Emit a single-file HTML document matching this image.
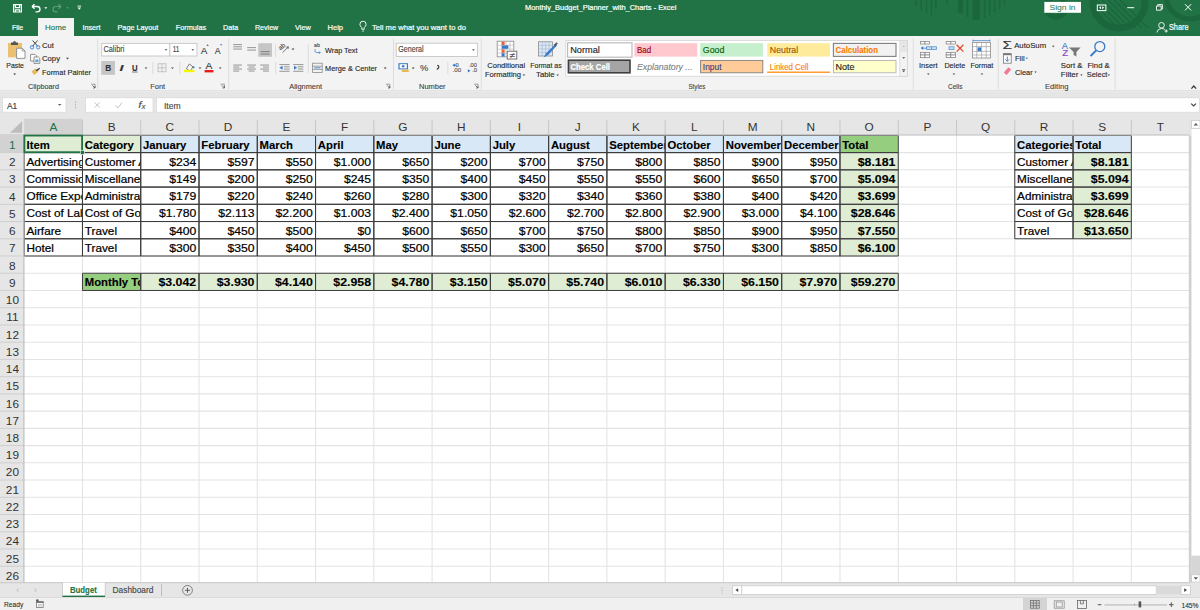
<!DOCTYPE html>
<html><head><meta charset="utf-8"><title>Excel</title>
<style>html,body{margin:0;padding:0;width:1200px;height:610px;overflow:hidden;background:#fff;font-family:"Liberation Sans", sans-serif;}</style>
</head><body>
<svg width="1200" height="610" viewBox="0 0 1200 610" style="position:absolute;left:0;top:0" font-family="&quot;Liberation Sans&quot;, sans-serif">
<rect x="0.00" y="0.00" width="1200.00" height="36.00" fill="#217346" />
<rect x="0.00" y="36.00" width="1200.00" height="55.00" fill="#F3F3F3" />
<rect x="0.00" y="90.30" width="1200.00" height="1.20" fill="#DCDCDC" />
<rect x="0.00" y="91.50" width="1200.00" height="43.87" fill="#E6E6E6" />
<g opacity="0.75" fill="none" stroke="#1A6239">
<rect x="915.6" y="0" width="1.4" height="6" fill="#1A6239" stroke="none"/>
<rect x="920.6" y="0" width="1.4" height="11" fill="#1A6239" stroke="none"/>
<rect x="925.8" y="0" width="1.4" height="13" fill="#1A6239" stroke="none"/>
<rect x="930.8" y="0" width="1.4" height="16" fill="#1A6239" stroke="none"/>
<rect x="935.2" y="0" width="1.4" height="9" fill="#1A6239" stroke="none"/>
<rect x="946.4" y="0" width="1.6" height="4" fill="#1A6239" stroke="none"/>
<rect x="957.8" y="0" width="5.2" height="13" fill="#1A6239" stroke="none"/>
<rect x="966.6" y="0" width="1.6" height="17" fill="#1A6239" stroke="none"/>
<rect x="972.6" y="0" width="7" height="20" fill="#1A6239" stroke="none"/>
<rect x="983.8" y="0" width="1.6" height="18" fill="#1A6239" stroke="none"/>
<rect x="988.8" y="0" width="1.6" height="15" fill="#1A6239" stroke="none"/>
<rect x="993.8" y="0" width="1.6" height="12" fill="#1A6239" stroke="none"/>
<rect x="998.8" y="0" width="1.6" height="9" fill="#1A6239" stroke="none"/>
<rect x="1003.8" y="0" width="1.4" height="5" fill="#1A6239" stroke="none"/>
<circle cx="1056" cy="7" r="10" stroke-width="5"/>
<circle cx="1119" cy="2" r="26" stroke-width="7"/>
<line x1="1090" y1="0" x2="1118" y2="28" stroke-width="1.2"/>
<line x1="1096" y1="0" x2="1124" y2="28" stroke-width="1.2"/>
<line x1="1102" y1="0" x2="1130" y2="28" stroke-width="1.2"/>
<line x1="1108" y1="0" x2="1136" y2="28" stroke-width="1.2"/>
<line x1="1114" y1="0" x2="1142" y2="28" stroke-width="1.2"/>
<line x1="1120" y1="0" x2="1148" y2="28" stroke-width="1.2"/>
<circle cx="1190" cy="-5" r="24" stroke-width="5"/>
</g>
<g fill="none" stroke="#fff" stroke-width="1.2"><path d="M13.6 4.6 H21.4 V12 H13.6 Z"/><path d="M15.4 4.8 V7.6 H19.6 V4.8"/><path d="M15.4 12 V9.8 H19.6 V12"/></g>
<path d="M32 6.5 L34.5 4.2 M32 6.5 L34.5 8.8 M32 6.5 H37 Q40 6.5 40 9.2 Q40 11.8 37 11.8 H35.5" fill="none" stroke="#fff" stroke-width="1.3"/>
<path d="M44.2 7.2 H47.4 L45.8 9 Z" fill="#fff"/>
<path d="M61 6.5 L58.5 4.2 M61 6.5 L58.5 8.8 M61 6.5 H56 Q53 6.5 53 9.2 Q53 11.8 56 11.8 H57.5" fill="none" stroke="#5E9C7A" stroke-width="1.2"/>
<path d="M66.2 7.2 H69 L67.6 8.8 Z" fill="#5E9C7A"/>
<rect x="77.5" y="5.6" width="3.6" height="0.9" fill="#fff"/><path d="M77.5 7.6 H81.1 L79.3 9.8 Z" fill="#fff"/>
<text x="525.00" y="10.20" font-size="7.3" fill="#FFFFFF" font-weight="normal" text-anchor="start" font-style="normal" textLength="151.30" lengthAdjust="spacingAndGlyphs" stroke="#FFFFFF" stroke-width="0.2">Monthly_Budget_Planner_with_Charts  -  Excel</text>
<rect x="1044.30" y="1.90" width="36.70" height="10.90" fill="#FFFFFF" />
<text x="1049.50" y="10.30" font-size="7.8" fill="#217346" font-weight="normal" text-anchor="start" font-style="normal" textLength="26" lengthAdjust="spacingAndGlyphs">Sign in</text>
<rect x="1097.3" y="5" width="8.6" height="5.6" fill="none" stroke="#fff" stroke-width="1"/><path d="M1099 7.8 L1101 6.3 V9.3 Z M1104.2 7.8 L1102.2 6.3 V9.3 Z" fill="#fff"/>
<rect x="1127.20" y="7.20" width="7.00" height="1.00" fill="#FFFFFF" />
<path d="M1156.5 6 H1161.2 V10.2 H1156.5 Z M1157.8 6 V4.6 H1162.4 V9 H1161.2" fill="none" stroke="#fff" stroke-width="0.9"/>
<path d="M1185 4.2 L1191.2 10.4 M1191.2 4.2 L1185 10.4" stroke="#fff" stroke-width="1"/>
<g fill="none" stroke="#fff" stroke-width="0.9"><circle cx="1161.5" cy="25.3" r="2.8"/><path d="M1156.8 32.5 Q1157.5 28.6 1161.5 28.4 Q1163.6 28.5 1164.8 29.6"/><path d="M1164.6 31 H1167.8 M1166.2 29.4 V32.6"/></g>
<text x="1169.00" y="30.30" font-size="8.2" fill="#FFFFFF" font-weight="normal" text-anchor="start" font-style="normal" textLength="19.50" lengthAdjust="spacingAndGlyphs" stroke="#FFFFFF" stroke-width="0.2">Share</text>
<rect x="38.00" y="18.00" width="36.00" height="18.50" fill="#F3F3F3" />
<text x="12.00" y="30.30" font-size="8" fill="#FFFFFF" font-weight="normal" text-anchor="start" font-style="normal" textLength="11.20" lengthAdjust="spacingAndGlyphs" stroke="#FFFFFF" stroke-width="0.2">File</text>
<text x="45.00" y="30.30" font-size="8" fill="#217346" font-weight="normal" text-anchor="start" font-style="normal" textLength="21.20" lengthAdjust="spacingAndGlyphs" stroke="#217346" stroke-width="0.12">Home</text>
<text x="82.50" y="30.30" font-size="8" fill="#FFFFFF" font-weight="normal" text-anchor="start" font-style="normal" textLength="18.00" lengthAdjust="spacingAndGlyphs" stroke="#FFFFFF" stroke-width="0.2">Insert</text>
<text x="117.50" y="30.30" font-size="8" fill="#FFFFFF" font-weight="normal" text-anchor="start" font-style="normal" textLength="40.80" lengthAdjust="spacingAndGlyphs" stroke="#FFFFFF" stroke-width="0.2">Page Layout</text>
<text x="175.80" y="30.30" font-size="8" fill="#FFFFFF" font-weight="normal" text-anchor="start" font-style="normal" textLength="30.40" lengthAdjust="spacingAndGlyphs" stroke="#FFFFFF" stroke-width="0.2">Formulas</text>
<text x="223.00" y="30.30" font-size="8" fill="#FFFFFF" font-weight="normal" text-anchor="start" font-style="normal" textLength="15.20" lengthAdjust="spacingAndGlyphs" stroke="#FFFFFF" stroke-width="0.2">Data</text>
<text x="255.00" y="30.30" font-size="8" fill="#FFFFFF" font-weight="normal" text-anchor="start" font-style="normal" textLength="23.20" lengthAdjust="spacingAndGlyphs" stroke="#FFFFFF" stroke-width="0.2">Review</text>
<text x="295.00" y="30.30" font-size="8" fill="#FFFFFF" font-weight="normal" text-anchor="start" font-style="normal" textLength="15.80" lengthAdjust="spacingAndGlyphs" stroke="#FFFFFF" stroke-width="0.2">View</text>
<text x="327.50" y="30.30" font-size="8" fill="#FFFFFF" font-weight="normal" text-anchor="start" font-style="normal" textLength="15.50" lengthAdjust="spacingAndGlyphs" stroke="#FFFFFF" stroke-width="0.2">Help</text>
<g fill="none" stroke="#fff" stroke-width="0.9"><path d="M361.8 29.3 V27.6 Q359.9 26.2 359.9 24.3 Q359.9 21.2 363 21.2 Q366.1 21.2 366.1 24.3 Q366.1 26.2 364.2 27.6 V29.3 Z"/><path d="M362.2 31.1 H363.8"/></g>
<text x="372.00" y="30.30" font-size="8" fill="#FFFFFF" font-weight="normal" text-anchor="start" font-style="normal" textLength="94.00" lengthAdjust="spacingAndGlyphs" stroke="#FFFFFF" stroke-width="0.2">Tell me what you want to do</text>
<rect x="8.00" y="43.00" width="14.00" height="14.30" fill="#EAC172" />
<path d="M11 45 V42.6 H13 Q13.3 41 14.5 41 Q15.7 41 16 42.6 H18 V45 Z" fill="#555"/>
<path d="M16.6 48.2 H22.2 L25 51 V58.4 H16.6 Z" fill="#fff" stroke="#8A8A8A" stroke-width="0.9"/>
<path d="M22.2 48.2 V51 H25" fill="none" stroke="#8A8A8A" stroke-width="0.8"/>
<text x="6.30" y="67.60" font-size="7.6" fill="#262626" font-weight="normal" text-anchor="start" font-style="normal" textLength="17.60" lengthAdjust="spacingAndGlyphs" stroke="#262626" stroke-width="0.12">Paste</text>
<path d="M13.30 73.60 H16.10 L14.70 75.14 Z" fill="#444"/>
<path d="M32.6 40.5 L37.8 46.3 M37.6 40.5 L32.5 46.3" stroke="#444" stroke-width="1"/>
<circle cx="32" cy="47.3" r="1.7" fill="none" stroke="#3E8EDE" stroke-width="1"/><circle cx="38.2" cy="47.3" r="1.7" fill="none" stroke="#3E8EDE" stroke-width="1"/>
<text x="42.00" y="47.60" font-size="7.6" fill="#262626" font-weight="normal" text-anchor="start" font-style="normal" textLength="11.80" lengthAdjust="spacingAndGlyphs" stroke="#262626" stroke-width="0.12">Cut</text>
<path d="M30.6 54.4 H35 L36.4 55.8 V61 H30.6 Z" fill="#fff" stroke="#777" stroke-width="0.8"/><path d="M34 57 H38.4 L39.8 58.4 V63.4 H34 Z" fill="#fff" stroke="#777" stroke-width="0.8"/><rect x="35.2" y="59.4" width="3.4" height="2.8" fill="#6FA6DC"/>
<text x="42.00" y="61.30" font-size="7.6" fill="#262626" font-weight="normal" text-anchor="start" font-style="normal" textLength="18.00" lengthAdjust="spacingAndGlyphs" stroke="#262626" stroke-width="0.12">Copy</text>
<path d="M66.00 57.80 H69.00 L67.50 59.45 Z" fill="#444"/>
<path d="M31.5 71.6 L35.2 68.6 L38 72 L34.2 75 Z" fill="#E8B95A"/><path d="M35.6 70 L39.6 67.8 L40 68.8 L37 71.6 Z" fill="#444"/>
<text x="42.00" y="74.80" font-size="7.6" fill="#262626" font-weight="normal" text-anchor="start" font-style="normal" textLength="49.00" lengthAdjust="spacingAndGlyphs" stroke="#262626" stroke-width="0.12">Format Painter</text>
<text x="28.00" y="88.80" font-size="7.4" fill="#444" font-weight="normal" text-anchor="start" font-style="normal" textLength="31.00" lengthAdjust="spacingAndGlyphs" stroke="#444" stroke-width="0.12">Clipboard</text>
<path d="M91.2 84.2 H95.0 V88.0" fill="none" stroke="#777" stroke-width="0.7"/><path d="M92.4 85.4 L94.8 87.8 M95.0 86.2 V88.0 H93.2" fill="none" stroke="#555" stroke-width="0.8"/>
<rect x="97.30" y="38.50" width="0.90" height="51.00" fill="#DADADA" />
<rect x="101.7" y="43.4" width="68.2" height="12.6" fill="#fff" stroke="#C6C6C6" stroke-width="0.9"/>
<rect x="169.9" y="43.4" width="27" height="12.6" fill="#fff" stroke="#C6C6C6" stroke-width="0.9"/>
<text x="103.40" y="52.40" font-size="8.2" fill="#444" font-weight="normal" text-anchor="start" font-style="normal" textLength="21.00" lengthAdjust="spacingAndGlyphs" stroke="#444" stroke-width="0.12">Calibri</text>
<path d="M164.60 49.20 H167.40 L166.00 50.74 Z" fill="#444"/>
<text x="172.80" y="52.40" font-size="8.2" fill="#444" font-weight="normal" text-anchor="start" font-style="normal" textLength="6.60" lengthAdjust="spacingAndGlyphs" stroke="#444" stroke-width="0.12">11</text>
<path d="M191.40 49.20 H194.20 L192.80 50.74 Z" fill="#444"/>
<text x="200.80" y="53.60" font-size="9.6" fill="#444" font-weight="normal" text-anchor="start" font-style="normal" textLength="6.60" lengthAdjust="spacingAndGlyphs" stroke="#444" stroke-width="0.12">A</text>
<path d="M206.4 45.8 L207.6 44.2 L208.8 45.8 Z" fill="#444"/>
<text x="214.80" y="53.60" font-size="8.2" fill="#444" font-weight="normal" text-anchor="start" font-style="normal" textLength="5.80" lengthAdjust="spacingAndGlyphs" stroke="#444" stroke-width="0.12">A</text>
<path d="M220 44.2 L221.2 45.8 L222.4 44.2 Z" fill="#3A7BC8"/>
<rect x="101.20" y="61.00" width="13.80" height="13.80" fill="#C6C6C6" />
<text x="105.20" y="71.40" font-size="8.6" fill="#333" font-weight="bold" text-anchor="start" font-style="normal" textLength="6.00" lengthAdjust="spacingAndGlyphs" stroke="#333" stroke-width="0.12">B</text>
<text x="119.60" y="71.40" font-size="8.6" fill="#333" font-weight="bold" text-anchor="start" font-style="italic" textLength="4.00" lengthAdjust="spacingAndGlyphs" stroke="#333" stroke-width="0.12">I</text>
<text x="132.00" y="70.60" font-size="8.4" fill="#333" font-weight="bold" text-anchor="start" font-style="normal" textLength="5.60" lengthAdjust="spacingAndGlyphs" stroke="#333" stroke-width="0.12">U</text>
<rect x="132.00" y="71.60" width="5.60" height="0.80" fill="#555" />
<path d="M144.60 67.40 H147.40 L146.00 68.94 Z" fill="#444"/>
<rect x="152.40" y="62.00" width="0.90" height="12.00" fill="#DADADA" />
<g fill="none" stroke="#B8B8B8" stroke-width="0.8"><rect x="158" y="63.8" width="8" height="8"/><path d="M162 63.8 V71.8 M158 67.8 H166"/></g>
<path d="M171.00 67.40 H173.80 L172.40 68.94 Z" fill="#444"/>
<rect x="179.40" y="62.00" width="0.90" height="12.00" fill="#DADADA" />
<path d="M186.4 68.6 L189.4 64 L193 67 L190 71 Z" fill="#fff" stroke="#555" stroke-width="0.8"/><circle cx="193.6" cy="67.2" r="1" fill="#3A7BC8"/>
<rect x="184.00" y="69.80" width="10.40" height="2.40" fill="#F5F500" />
<path d="M198.60 67.40 H201.40 L200.00 68.94 Z" fill="#444"/>
<text x="205.40" y="68.80" font-size="8.8" fill="#333" font-weight="normal" text-anchor="start" font-style="normal" textLength="6.80" lengthAdjust="spacingAndGlyphs" stroke="#333" stroke-width="0.12">A</text>
<rect x="204.60" y="70.00" width="8.80" height="2.40" fill="#E81A1A" />
<path d="M218.80 67.40 H221.60 L220.20 68.94 Z" fill="#444"/>
<text x="150.20" y="88.80" font-size="7.4" fill="#444" font-weight="normal" text-anchor="start" font-style="normal" textLength="15.00" lengthAdjust="spacingAndGlyphs" stroke="#444" stroke-width="0.12">Font</text>
<path d="M220.6 84.2 H224.4 V88.0" fill="none" stroke="#777" stroke-width="0.7"/><path d="M221.79999999999998 85.4 L224.2 87.8 M224.4 86.2 V88.0 H222.6" fill="none" stroke="#555" stroke-width="0.8"/>
<rect x="228.30" y="38.50" width="0.90" height="51.00" fill="#DADADA" />
<rect x="233.20" y="44.20" width="8.80" height="0.90" fill="#8A8A8A" />
<rect x="233.20" y="46.40" width="8.80" height="0.90" fill="#8A8A8A" />
<rect x="233.20" y="48.60" width="8.80" height="0.90" fill="#8A8A8A" />
<rect x="247.20" y="47.20" width="8.80" height="0.90" fill="#8A8A8A" />
<rect x="247.20" y="49.60" width="8.80" height="0.90" fill="#8A8A8A" />
<rect x="258.20" y="43.20" width="13.80" height="13.60" fill="#C6C6C6" />
<rect x="260.60" y="51.20" width="9.00" height="0.90" fill="#777" />
<rect x="260.60" y="53.60" width="9.00" height="0.90" fill="#777" />
<rect x="275.20" y="44.00" width="0.90" height="13.00" fill="#DADADA" />
<text transform="translate(280.6,50.6) rotate(-42)" font-size="6.4" fill="#444" stroke="#444" stroke-width="0.1">ab</text>
<path d="M282.6 52.6 L288.4 46.8 M288.4 46.8 L286.2 47.2 M288.4 46.8 L288 49" fill="none" stroke="#555" stroke-width="0.8"/>
<path d="M291.60 48.60 H294.40 L293.00 50.14 Z" fill="#444"/>
<rect x="307.80" y="44.00" width="0.90" height="29.00" fill="#DADADA" />
<text x="314.00" y="47.40" font-size="5.6" fill="#444" font-weight="normal" text-anchor="start" font-style="normal" textLength="5.80" lengthAdjust="spacingAndGlyphs" stroke="#444" stroke-width="0.12">ab</text>
<path d="M315.2 49.2 Q313.8 52.6 317.8 52.6 H320.2 L319 51.4 M320.2 52.6 L319 53.8" fill="none" stroke="#3A7BC8" stroke-width="0.8"/>
<text x="325.00" y="53.00" font-size="7.6" fill="#262626" font-weight="normal" text-anchor="start" font-style="normal" textLength="32.40" lengthAdjust="spacingAndGlyphs" stroke="#262626" stroke-width="0.12">Wrap Text</text>
<rect x="233.20" y="64.60" width="8.80" height="0.90" fill="#8A8A8A" />
<rect x="233.20" y="66.60" width="6.00" height="0.90" fill="#8A8A8A" />
<rect x="233.20" y="68.60" width="8.80" height="0.90" fill="#8A8A8A" />
<rect x="233.20" y="70.60" width="6.00" height="0.90" fill="#8A8A8A" />
<rect x="247.20" y="64.60" width="8.80" height="0.90" fill="#8A8A8A" />
<rect x="248.60" y="66.60" width="6.00" height="0.90" fill="#8A8A8A" />
<rect x="247.20" y="68.60" width="8.80" height="0.90" fill="#8A8A8A" />
<rect x="248.60" y="70.60" width="6.00" height="0.90" fill="#8A8A8A" />
<rect x="260.20" y="64.60" width="8.80" height="0.90" fill="#8A8A8A" />
<rect x="263.00" y="66.60" width="6.00" height="0.90" fill="#8A8A8A" />
<rect x="260.20" y="68.60" width="8.80" height="0.90" fill="#8A8A8A" />
<rect x="263.00" y="70.60" width="6.00" height="0.90" fill="#8A8A8A" />
<rect x="275.20" y="62.00" width="0.90" height="12.00" fill="#DADADA" />
<rect x="279.40" y="64.20" width="10.20" height="0.90" fill="#8A8A8A" />
<rect x="284.00" y="66.40" width="5.60" height="0.90" fill="#8A8A8A" />
<rect x="284.00" y="68.60" width="5.60" height="0.90" fill="#8A8A8A" />
<rect x="279.40" y="70.80" width="10.20" height="0.90" fill="#8A8A8A" />
<path d="M279.4 67.8 L282.6 65.8 V69.8 Z" fill="#3A7BC8"/>
<rect x="293.20" y="64.20" width="10.20" height="0.90" fill="#8A8A8A" />
<rect x="297.80" y="66.40" width="5.60" height="0.90" fill="#8A8A8A" />
<rect x="297.80" y="68.60" width="5.60" height="0.90" fill="#8A8A8A" />
<rect x="293.20" y="70.80" width="10.20" height="0.90" fill="#8A8A8A" />
<path d="M297.2 67.8 L294 65.8 V69.8 Z" fill="#3A7BC8"/>
<g fill="none" stroke="#8A8A8A" stroke-width="0.8"><rect x="312.6" y="63.2" width="9.6" height="9.2"/><path d="M312.6 66.2 H322.2 M312.6 69.4 H322.2"/></g>
<rect x="314.20" y="67.40" width="6.40" height="0.90" fill="#3A7BC8" />
<text x="325.00" y="70.60" font-size="7.6" fill="#262626" font-weight="normal" text-anchor="start" font-style="normal" textLength="52.00" lengthAdjust="spacingAndGlyphs" stroke="#262626" stroke-width="0.12">Merge &amp; Center</text>
<path d="M383.80 67.60 H386.60 L385.20 69.14 Z" fill="#444"/>
<text x="289.20" y="88.80" font-size="7.4" fill="#444" font-weight="normal" text-anchor="start" font-style="normal" textLength="33.00" lengthAdjust="spacingAndGlyphs" stroke="#444" stroke-width="0.12">Alignment</text>
<path d="M386 84.2 H389.8 V88.0" fill="none" stroke="#777" stroke-width="0.7"/><path d="M387.2 85.4 L389.6 87.8 M389.8 86.2 V88.0 H388" fill="none" stroke="#555" stroke-width="0.8"/>
<rect x="393.00" y="38.50" width="0.90" height="51.00" fill="#DADADA" />
<rect x="396.2" y="43.2" width="81.2" height="13.3" fill="#fff" stroke="#C6C6C6" stroke-width="0.9"/>
<text x="398.20" y="52.40" font-size="8.2" fill="#444" font-weight="normal" text-anchor="start" font-style="normal" textLength="25.40" lengthAdjust="spacingAndGlyphs" stroke="#444" stroke-width="0.12">General</text>
<path d="M472.00 49.20 H474.80 L473.40 50.74 Z" fill="#444"/>
<rect x="398.4" y="63.2" width="9.6" height="6.2" fill="#3A7BC8"/><rect x="399.6" y="64.2" width="7.2" height="4.2" fill="#fff"/><circle cx="403.2" cy="66.3" r="1.3" fill="#3A7BC8"/><rect x="401.8" y="69.6" width="7" height="2.4" fill="#E8B95A"/>
<path d="M411.80 67.60 H414.60 L413.20 69.14 Z" fill="#444"/>
<text x="420.00" y="71.20" font-size="9.4" fill="#444" font-weight="normal" text-anchor="start" font-style="normal" textLength="8.20" lengthAdjust="spacingAndGlyphs" stroke="#444" stroke-width="0.12">%</text>
<path d="M437.2 65.4 Q438.8 65.4 438.8 66.8 Q438.8 68.6 436.8 69.4" fill="none" stroke="#444" stroke-width="1.3"/>
<rect x="447.40" y="62.00" width="0.90" height="12.00" fill="#DADADA" />
<text x="455.40" y="67.20" font-size="5.4" fill="#555" font-weight="normal" text-anchor="start" font-style="normal" textLength="3.20" lengthAdjust="spacingAndGlyphs" stroke="#555" stroke-width="0.12">0</text>
<text x="452.60" y="72.40" font-size="5.4" fill="#555" font-weight="normal" text-anchor="start" font-style="normal" textLength="8.60" lengthAdjust="spacingAndGlyphs" stroke="#555" stroke-width="0.12">.00</text>
<path d="M452.2 65.2 L455 63.6 V66.8 Z" fill="#3A7BC8"/><rect x="454" y="64.8" width="2.6" height="0.9" fill="#3A7BC8"/>
<text x="469.00" y="67.20" font-size="5.4" fill="#555" font-weight="normal" text-anchor="start" font-style="normal" textLength="8.00" lengthAdjust="spacingAndGlyphs" stroke="#555" stroke-width="0.12">.00</text>
<text x="472.20" y="72.40" font-size="5.4" fill="#555" font-weight="normal" text-anchor="start" font-style="normal" textLength="5.00" lengthAdjust="spacingAndGlyphs" stroke="#555" stroke-width="0.12">.0</text>
<path d="M470.6 70.8 L467.8 69.2 V72.4 Z" fill="#3A7BC8" transform="translate(0,0)"/>
<text x="419.00" y="88.80" font-size="7.4" fill="#444" font-weight="normal" text-anchor="start" font-style="normal" textLength="26.60" lengthAdjust="spacingAndGlyphs" stroke="#444" stroke-width="0.12">Number</text>
<path d="M474.2 84.2 H478.0 V88.0" fill="none" stroke="#777" stroke-width="0.7"/><path d="M475.4 85.4 L477.8 87.8 M478.0 86.2 V88.0 H476.2" fill="none" stroke="#555" stroke-width="0.8"/>
<rect x="480.80" y="38.50" width="0.90" height="51.00" fill="#DADADA" />
<g><rect x="497.2" y="41.2" width="16.6" height="15.6" fill="#fff" stroke="#8A8A8A" stroke-width="0.8"/><path d="M497.2 45.2 H513.8 M497.2 49.2 H513.8 M497.2 53 H513.8 M501.6 41.2 V56.8 M506 41.2 V56.8 M510 41.2 V56.8" stroke="#B0B0B0" stroke-width="0.6"/><rect x="501.8" y="41.6" width="2.8" height="3.4" fill="#E8623A"/><rect x="501.8" y="45.4" width="6.6" height="3.4" fill="#3A7BC8"/><rect x="501.8" y="49.4" width="2.8" height="3.4" fill="#E8623A"/><rect x="501.8" y="53.2" width="2.8" height="3.4" fill="#3A7BC8"/><rect x="507.2" y="51.2" width="9.6" height="7.8" fill="#fff" stroke="#555" stroke-width="0.8"/></g>
<text x="509.40" y="57.60" font-size="7.6" fill="#333" font-weight="normal" text-anchor="start" font-style="normal" textLength="5.60" lengthAdjust="spacingAndGlyphs" stroke="#333" stroke-width="0.12">≠</text>
<text x="487.20" y="67.80" font-size="7.6" fill="#262626" font-weight="normal" text-anchor="start" font-style="normal" textLength="38.00" lengthAdjust="spacingAndGlyphs" stroke="#262626" stroke-width="0.12">Conditional</text>
<text x="485.00" y="77.20" font-size="7.6" fill="#262626" font-weight="normal" text-anchor="start" font-style="normal" textLength="36.00" lengthAdjust="spacingAndGlyphs" stroke="#262626" stroke-width="0.12">Formatting</text>
<path d="M522.60 74.60 H525.20 L523.90 76.03 Z" fill="#444"/>
<g><rect x="538.6" y="41.8" width="13.8" height="14.2" fill="#DCE8F5" stroke="#8A8A8A" stroke-width="0.8"/><path d="M538.6 45.4 H552.4 M538.6 49 H552.4 M538.6 52.4 H552.4 M542.2 41.8 V56 M545.6 41.8 V56 M549 41.8 V56" stroke="#9FB7D3" stroke-width="0.6"/><path d="M543.6 57.6 L546 53.2 L555.6 44 L557 45.4 L548 55 Z" fill="#3A7BC8"/><path d="M553.6 45 L556.6 42.2 L557.8 43.4 L555 46.4 Z" fill="#555"/></g>
<text x="530.20" y="67.80" font-size="7.6" fill="#262626" font-weight="normal" text-anchor="start" font-style="normal" textLength="31.60" lengthAdjust="spacingAndGlyphs" stroke="#262626" stroke-width="0.12">Format as</text>
<text x="536.00" y="77.20" font-size="7.6" fill="#262626" font-weight="normal" text-anchor="start" font-style="normal" textLength="18.60" lengthAdjust="spacingAndGlyphs" stroke="#262626" stroke-width="0.12">Table</text>
<path d="M556.40 74.60 H559.00 L557.70 76.03 Z" fill="#444"/>
<rect x="565.8" y="40.4" width="341.6" height="35.8" fill="#FFFFFF" stroke="#D4D4D4" stroke-width="0.8"/>
<rect x="567.60" y="42.80" width="64.40" height="14.40" fill="#FFFFFF" stroke="#BDBDBD" stroke-width="1.2"/>
<text x="570.20" y="52.80" font-size="8.2" fill="#222" font-weight="normal" text-anchor="start" font-style="normal" textLength="29.60" lengthAdjust="spacingAndGlyphs" stroke="#222" stroke-width="0.12">Normal</text>
<rect x="568.40" y="60.20" width="61.60" height="12.60" fill="#A5A5A5" stroke="#3F3F3F" stroke-width="1.6"/>
<text x="570.40" y="69.80" font-size="8.4" fill="#FFFFFF" font-weight="bold" text-anchor="start" font-style="normal" textLength="39.60" lengthAdjust="spacingAndGlyphs" stroke="#FFFFFF" stroke-width="0.2">Check Cell</text>
<rect x="634.40" y="43.20" width="62.80" height="13.40" fill="#FFC7CE" />
<text x="637.00" y="52.80" font-size="8.2" fill="#9C0006" font-weight="normal" text-anchor="start" font-style="normal" textLength="14.20" lengthAdjust="spacingAndGlyphs" stroke="#9C0006" stroke-width="0.12">Bad</text>
<text x="637.00" y="69.60" font-size="8.2" fill="#7F7F7F" font-weight="normal" text-anchor="start" font-style="italic" textLength="55.60" lengthAdjust="spacingAndGlyphs" stroke="#7F7F7F" stroke-width="0.12">Explanatory ...</text>
<rect x="700.20" y="43.20" width="62.80" height="13.40" fill="#C6EFCE" />
<text x="702.80" y="52.80" font-size="8.2" fill="#006100" font-weight="normal" text-anchor="start" font-style="normal" textLength="21.60" lengthAdjust="spacingAndGlyphs" stroke="#006100" stroke-width="0.12">Good</text>
<rect x="700.60" y="60.40" width="62.20" height="12.40" fill="#FFCC99" stroke="#7F7F7F" stroke-width="0.9"/>
<text x="702.80" y="69.60" font-size="8.2" fill="#3F3F76" font-weight="normal" text-anchor="start" font-style="normal" textLength="18.80" lengthAdjust="spacingAndGlyphs" stroke="#3F3F76" stroke-width="0.12">Input</text>
<rect x="767.20" y="43.20" width="62.80" height="13.40" fill="#FFEB9C" />
<text x="769.80" y="52.80" font-size="8.2" fill="#9C5700" font-weight="normal" text-anchor="start" font-style="normal" textLength="28.40" lengthAdjust="spacingAndGlyphs" stroke="#9C5700" stroke-width="0.12">Neutral</text>
<text x="769.80" y="69.60" font-size="8.2" fill="#FA7D00" font-weight="normal" text-anchor="start" font-style="normal" textLength="38.80" lengthAdjust="spacingAndGlyphs" stroke="#FA7D00" stroke-width="0.12">Linked Cell</text>
<rect x="767.20" y="71.60" width="62.80" height="1.20" fill="#FF8001" />
<rect x="833.40" y="43.40" width="62.60" height="13.00" fill="#F2F2F2" stroke="#7F7F7F" stroke-width="1.1"/>
<text x="835.60" y="52.80" font-size="8.2" fill="#FA7D00" font-weight="bold" text-anchor="start" font-style="normal" textLength="42.40" lengthAdjust="spacingAndGlyphs" stroke="#FA7D00" stroke-width="0.12">Calculation</text>
<rect x="833.40" y="60.40" width="62.60" height="12.40" fill="#FFFFCC" stroke="#B2B2B2" stroke-width="0.9"/>
<text x="835.60" y="69.60" font-size="8.2" fill="#222" font-weight="normal" text-anchor="start" font-style="normal" textLength="19.00" lengthAdjust="spacingAndGlyphs" stroke="#222" stroke-width="0.12">Note</text>
<rect x="899.8" y="40.4" width="7.6" height="35.8" fill="#F3F3F3" stroke="#D4D4D4" stroke-width="0.8"/>
<rect x="900.20" y="40.80" width="6.80" height="11.60" fill="#E6E6E6" />
<path d="M902.4 47 H905 L903.7 45.8 Z" fill="#B8B8B8"/><path d="M902.2 57.2 H905.2 L903.7 58.8 Z" fill="#444"/><rect x="902.2" y="69.2" width="3" height="0.7" fill="#444"/><path d="M902.2 70.6 H905.2 L903.7 72.2 Z" fill="#444"/>
<text x="688.40" y="88.80" font-size="7.4" fill="#444" font-weight="normal" text-anchor="start" font-style="normal" textLength="17.00" lengthAdjust="spacingAndGlyphs" stroke="#444" stroke-width="0.12">Styles</text>
<rect x="912.80" y="38.50" width="0.90" height="51.00" fill="#DADADA" />
<g fill="#fff" stroke="#8A8A8A" stroke-width="0.8"><rect x="920.4" y="41.4" width="4.6" height="2.6"/><rect x="925" y="41.4" width="4.6" height="2.6"/><rect x="926.4" y="46.8" width="5" height="2.6" fill="#CFE0F3" stroke="#5B8FCC"/><rect x="931.4" y="46.8" width="5" height="2.6" fill="#CFE0F3" stroke="#5B8FCC"/><rect x="920.4" y="52.4" width="4.6" height="2.6"/><rect x="925" y="52.4" width="4.6" height="2.6"/><rect x="920.4" y="55" width="4.6" height="2.6"/><rect x="925" y="55" width="4.6" height="2.6"/></g><path d="M920.6 48.1 L923.2 46.2 V50 Z M922.6 47.7 H926.2 V48.6 H922.6 Z" fill="#3A7BC8"/>
<text x="919.00" y="67.80" font-size="7.6" fill="#262626" font-weight="normal" text-anchor="start" font-style="normal" textLength="18.60" lengthAdjust="spacingAndGlyphs" stroke="#262626" stroke-width="0.12">Insert</text>
<path d="M927.00 73.60 H929.60 L928.30 75.03 Z" fill="#444"/>
<g fill="#fff" stroke="#8A8A8A" stroke-width="0.8"><rect x="946.2" y="41.4" width="4.6" height="2.6"/><rect x="950.8" y="41.4" width="4.6" height="2.6"/><rect x="949" y="46.8" width="5" height="2.6" fill="#CFE0F3" stroke="#5B8FCC"/><rect x="946.2" y="52.4" width="4.6" height="2.6"/><rect x="950.8" y="52.4" width="4.6" height="2.6"/><rect x="946.2" y="55" width="4.6" height="2.6"/><rect x="950.8" y="55" width="4.6" height="2.6"/></g><path d="M956.6 44.8 L963.4 51.6 M963.4 44.8 L956.6 51.6" stroke="#E34A2A" stroke-width="1.3"/>
<text x="944.40" y="67.80" font-size="7.6" fill="#262626" font-weight="normal" text-anchor="start" font-style="normal" textLength="20.80" lengthAdjust="spacingAndGlyphs" stroke="#262626" stroke-width="0.12">Delete</text>
<path d="M952.60 73.60 H955.20 L953.90 75.03 Z" fill="#444"/>
<g><rect x="972.4" y="42.6" width="18" height="15.4" fill="#fff" stroke="#8A8A8A" stroke-width="0.8"/><path d="M972.4 46.6 H990.4 M972.4 51.4 H990.4 M972.4 55 H990.4 M976.8 42.6 V58 M981.6 42.6 V58 M986.2 42.6 V58" stroke="#A0A0A0" stroke-width="0.7"/><rect x="977.6" y="47.4" width="3.6" height="3.8" fill="#3A7BC8"/><path d="M972.6 40.6 H990.2 M973 39.6 V41.6 M989.8 39.6 V41.6" stroke="#3A7BC8" stroke-width="0.7"/></g>
<text x="970.40" y="67.80" font-size="7.6" fill="#262626" font-weight="normal" text-anchor="start" font-style="normal" textLength="23.00" lengthAdjust="spacingAndGlyphs" stroke="#262626" stroke-width="0.12">Format</text>
<path d="M980.60 73.60 H983.20 L981.90 75.03 Z" fill="#444"/>
<text x="948.00" y="88.80" font-size="7.4" fill="#444" font-weight="normal" text-anchor="start" font-style="normal" textLength="14.40" lengthAdjust="spacingAndGlyphs" stroke="#444" stroke-width="0.12">Cells</text>
<rect x="997.80" y="38.50" width="0.90" height="51.00" fill="#DADADA" />
<text x="1002.60" y="49.00" font-size="10.2" fill="#333" font-weight="normal" text-anchor="start" font-style="normal" textLength="9.60" lengthAdjust="spacingAndGlyphs" stroke="#333" stroke-width="0.12">Σ</text>
<text x="1014.20" y="48.00" font-size="7.6" fill="#262626" font-weight="normal" text-anchor="start" font-style="normal" textLength="32.00" lengthAdjust="spacingAndGlyphs" stroke="#262626" stroke-width="0.12">AutoSum</text>
<path d="M1052.00 45.80 H1054.60 L1053.30 47.23 Z" fill="#444"/>
<rect x="1003.4" y="53.6" width="7.8" height="9.6" fill="#fff" stroke="#777" stroke-width="0.8"/><rect x="1003.4" y="53.6" width="7.8" height="1.6" fill="#777"/><path d="M1007.3 56.6 V61.2 M1005.4 59.4 L1007.3 61.4 L1009.2 59.4" fill="none" stroke="#3A7BC8" stroke-width="0.9"/>
<text x="1015.00" y="61.20" font-size="7.6" fill="#262626" font-weight="normal" text-anchor="start" font-style="normal" textLength="9.60" lengthAdjust="spacingAndGlyphs" stroke="#262626" stroke-width="0.12">Fill</text>
<path d="M1025.60 57.80 H1028.00 L1026.80 59.12 Z" fill="#444"/>
<path d="M1003.8 72.6 L1008.4 67.2 L1011.2 69.6 L1006.6 75 Z" fill="#F07A96"/>
<text x="1015.00" y="74.80" font-size="7.6" fill="#262626" font-weight="normal" text-anchor="start" font-style="normal" textLength="17.60" lengthAdjust="spacingAndGlyphs" stroke="#262626" stroke-width="0.12">Clear</text>
<path d="M1034.40 71.60 H1036.80 L1035.60 72.92 Z" fill="#444"/>
<text x="1061.80" y="48.60" font-size="8.8" fill="#3A7BC8" font-weight="normal" text-anchor="start" font-style="normal" textLength="6.20" lengthAdjust="spacingAndGlyphs" stroke="#3A7BC8" stroke-width="0.12">A</text>
<text x="1062.20" y="56.40" font-size="8.8" fill="#8A44C8" font-weight="normal" text-anchor="start" font-style="normal" textLength="6.00" lengthAdjust="spacingAndGlyphs" stroke="#8A44C8" stroke-width="0.12">Z</text>
<path d="M1069 47.4 H1080.6 L1076.4 52 V56.6 L1073.6 55 V52 Z" fill="#777"/>
<text x="1060.80" y="67.80" font-size="7.6" fill="#262626" font-weight="normal" text-anchor="start" font-style="normal" textLength="21.60" lengthAdjust="spacingAndGlyphs" stroke="#262626" stroke-width="0.12">Sort &amp;</text>
<text x="1060.80" y="77.20" font-size="7.6" fill="#262626" font-weight="normal" text-anchor="start" font-style="normal" textLength="17.60" lengthAdjust="spacingAndGlyphs" stroke="#262626" stroke-width="0.12">Filter</text>
<path d="M1080.20 74.60 H1082.60 L1081.40 75.92 Z" fill="#444"/>
<circle cx="1099.8" cy="46.6" r="5" fill="none" stroke="#3A7BC8" stroke-width="1.3"/><path d="M1096.2 50.4 L1090.6 56" stroke="#3A7BC8" stroke-width="2"/>
<text x="1087.40" y="67.80" font-size="7.6" fill="#262626" font-weight="normal" text-anchor="start" font-style="normal" textLength="22.40" lengthAdjust="spacingAndGlyphs" stroke="#262626" stroke-width="0.12">Find &amp;</text>
<text x="1086.80" y="77.20" font-size="7.6" fill="#262626" font-weight="normal" text-anchor="start" font-style="normal" textLength="20.60" lengthAdjust="spacingAndGlyphs" stroke="#262626" stroke-width="0.12">Select</text>
<path d="M1107.60 74.60 H1110.00 L1108.80 75.92 Z" fill="#444"/>
<text x="1045.00" y="88.80" font-size="7.4" fill="#444" font-weight="normal" text-anchor="start" font-style="normal" textLength="23.40" lengthAdjust="spacingAndGlyphs" stroke="#444" stroke-width="0.12">Editing</text>
<rect x="1114.60" y="38.50" width="0.90" height="51.00" fill="#DADADA" />
<path d="M1191.4 88.6 L1193.8 86 L1196.2 88.6" fill="none" stroke="#333" stroke-width="1.2"/>
<rect x="2.6" y="97.8" width="63.4" height="14.4" fill="#fff" stroke="#D8D8D8" stroke-width="0.7"/>
<text x="7.00" y="108.60" font-size="8.6" fill="#333" font-weight="normal" text-anchor="start" font-style="normal" textLength="10.20" lengthAdjust="spacingAndGlyphs" stroke="#333" stroke-width="0.12">A1</text>
<path d="M58.00 104.00 H61.40 L59.70 105.87 Z" fill="#555"/>
<rect x="75.00" y="101.60" width="1.00" height="1.00" fill="#999" />
<rect x="75.00" y="104.40" width="1.00" height="1.00" fill="#999" />
<rect x="75.00" y="107.20" width="1.00" height="1.00" fill="#999" />
<rect x="85.6" y="97.8" width="67.4" height="14.4" fill="#fff" stroke="#D8D8D8" stroke-width="0.7"/>
<path d="M94.6 102.4 L99.8 107.6 M99.8 102.4 L94.6 107.6" stroke="#BDBDBD" stroke-width="0.9"/>
<path d="M115.6 105.6 L117.8 108 L122 102.6" fill="none" stroke="#BDBDBD" stroke-width="0.9"/>
<text x="138.20" y="107.80" font-size="8.6" fill="#555" font-weight="normal" text-anchor="start" font-style="italic" textLength="3.40" lengthAdjust="spacingAndGlyphs" stroke="#555" stroke-width="0.12">f</text>
<text x="141.60" y="108.60" font-size="6.6" fill="#555" font-weight="normal" text-anchor="start" font-style="italic" textLength="4.00" lengthAdjust="spacingAndGlyphs" stroke="#555" stroke-width="0.12">x</text>
<rect x="156.6" y="97.8" width="1043" height="14.4" fill="#fff" stroke="#D8D8D8" stroke-width="0.7"/>
<text x="164.00" y="108.60" font-size="8.6" fill="#444" font-weight="normal" text-anchor="start" font-style="normal" textLength="16.60" lengthAdjust="spacingAndGlyphs" stroke="#444" stroke-width="0.12">Item</text>
<path d="M1191.2 103.6 L1193.6 106 L1196 103.6" fill="none" stroke="#444" stroke-width="1.2"/>
<rect x="24.20" y="135.37" width="1165.20" height="447.13" fill="#FFFFFF" />
<rect x="0.00" y="135.37" width="24.20" height="447.13" fill="#E6E6E6" />
<rect x="24.20" y="135.37" width="58.27" height="17.23" fill="#DEEDD4" />
<rect x="82.47" y="135.37" width="58.27" height="17.23" fill="#DEEDD4" />
<rect x="140.74" y="135.37" width="58.27" height="17.23" fill="#D9E8F6" />
<rect x="199.01" y="135.37" width="58.27" height="17.23" fill="#D9E8F6" />
<rect x="257.28" y="135.37" width="58.27" height="17.23" fill="#D9E8F6" />
<rect x="315.55" y="135.37" width="58.27" height="17.23" fill="#D9E8F6" />
<rect x="373.82" y="135.37" width="58.27" height="17.23" fill="#D9E8F6" />
<rect x="432.09" y="135.37" width="58.27" height="17.23" fill="#D9E8F6" />
<rect x="490.36" y="135.37" width="58.27" height="17.23" fill="#D9E8F6" />
<rect x="548.63" y="135.37" width="58.27" height="17.23" fill="#D9E8F6" />
<rect x="606.90" y="135.37" width="58.27" height="17.23" fill="#D9E8F6" />
<rect x="665.17" y="135.37" width="58.27" height="17.23" fill="#D9E8F6" />
<rect x="723.44" y="135.37" width="58.27" height="17.23" fill="#D9E8F6" />
<rect x="781.71" y="135.37" width="58.27" height="17.23" fill="#D9E8F6" />
<rect x="839.98" y="135.37" width="58.27" height="17.23" fill="#96CE7F" />
<rect x="839.98" y="152.60" width="58.27" height="17.23" fill="#DEEDD4" />
<rect x="839.98" y="169.83" width="58.27" height="17.23" fill="#DEEDD4" />
<rect x="839.98" y="187.07" width="58.27" height="17.23" fill="#DEEDD4" />
<rect x="839.98" y="204.31" width="58.27" height="17.23" fill="#DEEDD4" />
<rect x="839.98" y="221.54" width="58.27" height="17.23" fill="#DEEDD4" />
<rect x="839.98" y="238.77" width="58.27" height="17.23" fill="#DEEDD4" />
<rect x="82.47" y="273.25" width="58.27" height="17.23" fill="#96CE7F" />
<rect x="140.74" y="273.25" width="58.27" height="17.23" fill="#DEEDD4" />
<rect x="199.01" y="273.25" width="58.27" height="17.23" fill="#DEEDD4" />
<rect x="257.28" y="273.25" width="58.27" height="17.23" fill="#DEEDD4" />
<rect x="315.55" y="273.25" width="58.27" height="17.23" fill="#DEEDD4" />
<rect x="373.82" y="273.25" width="58.27" height="17.23" fill="#DEEDD4" />
<rect x="432.09" y="273.25" width="58.27" height="17.23" fill="#DEEDD4" />
<rect x="490.36" y="273.25" width="58.27" height="17.23" fill="#DEEDD4" />
<rect x="548.63" y="273.25" width="58.27" height="17.23" fill="#DEEDD4" />
<rect x="606.90" y="273.25" width="58.27" height="17.23" fill="#DEEDD4" />
<rect x="665.17" y="273.25" width="58.27" height="17.23" fill="#DEEDD4" />
<rect x="723.44" y="273.25" width="58.27" height="17.23" fill="#DEEDD4" />
<rect x="781.71" y="273.25" width="58.27" height="17.23" fill="#DEEDD4" />
<rect x="839.98" y="273.25" width="58.27" height="17.23" fill="#DEEDD4" />
<rect x="1014.79" y="135.37" width="58.27" height="17.23" fill="#D9E8F6" />
<rect x="1073.06" y="135.37" width="58.27" height="17.23" fill="#D9E8F6" />
<rect x="1073.06" y="152.60" width="58.27" height="17.23" fill="#DEEDD4" />
<rect x="1073.06" y="169.83" width="58.27" height="17.23" fill="#DEEDD4" />
<rect x="1073.06" y="187.07" width="58.27" height="17.23" fill="#DEEDD4" />
<rect x="1073.06" y="204.31" width="58.27" height="17.23" fill="#DEEDD4" />
<rect x="1073.06" y="221.54" width="58.27" height="17.23" fill="#DEEDD4" />
<line x1="82.47" y1="135.37" x2="82.47" y2="582.50" stroke="#E3E3E3" stroke-width="1.05" />
<line x1="140.74" y1="135.37" x2="140.74" y2="582.50" stroke="#E3E3E3" stroke-width="1.05" />
<line x1="199.01" y1="135.37" x2="199.01" y2="582.50" stroke="#E3E3E3" stroke-width="1.05" />
<line x1="257.28" y1="135.37" x2="257.28" y2="582.50" stroke="#E3E3E3" stroke-width="1.05" />
<line x1="315.55" y1="135.37" x2="315.55" y2="582.50" stroke="#E3E3E3" stroke-width="1.05" />
<line x1="373.82" y1="135.37" x2="373.82" y2="582.50" stroke="#E3E3E3" stroke-width="1.05" />
<line x1="432.09" y1="135.37" x2="432.09" y2="582.50" stroke="#E3E3E3" stroke-width="1.05" />
<line x1="490.36" y1="135.37" x2="490.36" y2="582.50" stroke="#E3E3E3" stroke-width="1.05" />
<line x1="548.63" y1="135.37" x2="548.63" y2="582.50" stroke="#E3E3E3" stroke-width="1.05" />
<line x1="606.90" y1="135.37" x2="606.90" y2="582.50" stroke="#E3E3E3" stroke-width="1.05" />
<line x1="665.17" y1="135.37" x2="665.17" y2="582.50" stroke="#E3E3E3" stroke-width="1.05" />
<line x1="723.44" y1="135.37" x2="723.44" y2="582.50" stroke="#E3E3E3" stroke-width="1.05" />
<line x1="781.71" y1="135.37" x2="781.71" y2="582.50" stroke="#E3E3E3" stroke-width="1.05" />
<line x1="839.98" y1="135.37" x2="839.98" y2="582.50" stroke="#E3E3E3" stroke-width="1.05" />
<line x1="898.25" y1="135.37" x2="898.25" y2="582.50" stroke="#E3E3E3" stroke-width="1.05" />
<line x1="956.52" y1="135.37" x2="956.52" y2="582.50" stroke="#E3E3E3" stroke-width="1.05" />
<line x1="1014.79" y1="135.37" x2="1014.79" y2="582.50" stroke="#E3E3E3" stroke-width="1.05" />
<line x1="1073.06" y1="135.37" x2="1073.06" y2="582.50" stroke="#E3E3E3" stroke-width="1.05" />
<line x1="1131.33" y1="135.37" x2="1131.33" y2="582.50" stroke="#E3E3E3" stroke-width="1.05" />
<line x1="1189.60" y1="135.37" x2="1189.60" y2="582.50" stroke="#E3E3E3" stroke-width="1.05" />
<line x1="24.20" y1="152.60" x2="1189.40" y2="152.60" stroke="#E3E3E3" stroke-width="1.05" />
<line x1="24.20" y1="169.83" x2="1189.40" y2="169.83" stroke="#E3E3E3" stroke-width="1.05" />
<line x1="24.20" y1="187.07" x2="1189.40" y2="187.07" stroke="#E3E3E3" stroke-width="1.05" />
<line x1="24.20" y1="204.31" x2="1189.40" y2="204.31" stroke="#E3E3E3" stroke-width="1.05" />
<line x1="24.20" y1="221.54" x2="1189.40" y2="221.54" stroke="#E3E3E3" stroke-width="1.05" />
<line x1="24.20" y1="238.77" x2="1189.40" y2="238.77" stroke="#E3E3E3" stroke-width="1.05" />
<line x1="24.20" y1="256.01" x2="1189.40" y2="256.01" stroke="#E3E3E3" stroke-width="1.05" />
<line x1="24.20" y1="273.25" x2="1189.40" y2="273.25" stroke="#E3E3E3" stroke-width="1.05" />
<line x1="24.20" y1="290.48" x2="1189.40" y2="290.48" stroke="#E3E3E3" stroke-width="1.05" />
<line x1="24.20" y1="307.72" x2="1189.40" y2="307.72" stroke="#E3E3E3" stroke-width="1.05" />
<line x1="24.20" y1="324.95" x2="1189.40" y2="324.95" stroke="#E3E3E3" stroke-width="1.05" />
<line x1="24.20" y1="342.18" x2="1189.40" y2="342.18" stroke="#E3E3E3" stroke-width="1.05" />
<line x1="24.20" y1="359.42" x2="1189.40" y2="359.42" stroke="#E3E3E3" stroke-width="1.05" />
<line x1="24.20" y1="376.65" x2="1189.40" y2="376.65" stroke="#E3E3E3" stroke-width="1.05" />
<line x1="24.20" y1="393.89" x2="1189.40" y2="393.89" stroke="#E3E3E3" stroke-width="1.05" />
<line x1="24.20" y1="411.12" x2="1189.40" y2="411.12" stroke="#E3E3E3" stroke-width="1.05" />
<line x1="24.20" y1="428.36" x2="1189.40" y2="428.36" stroke="#E3E3E3" stroke-width="1.05" />
<line x1="24.20" y1="445.60" x2="1189.40" y2="445.60" stroke="#E3E3E3" stroke-width="1.05" />
<line x1="24.20" y1="462.83" x2="1189.40" y2="462.83" stroke="#E3E3E3" stroke-width="1.05" />
<line x1="24.20" y1="480.06" x2="1189.40" y2="480.06" stroke="#E3E3E3" stroke-width="1.05" />
<line x1="24.20" y1="497.30" x2="1189.40" y2="497.30" stroke="#E3E3E3" stroke-width="1.05" />
<line x1="24.20" y1="514.53" x2="1189.40" y2="514.53" stroke="#E3E3E3" stroke-width="1.05" />
<line x1="24.20" y1="531.77" x2="1189.40" y2="531.77" stroke="#E3E3E3" stroke-width="1.05" />
<line x1="24.20" y1="549.00" x2="1189.40" y2="549.00" stroke="#E3E3E3" stroke-width="1.05" />
<line x1="24.20" y1="566.24" x2="1189.40" y2="566.24" stroke="#E3E3E3" stroke-width="1.05" />
<line x1="24.20" y1="583.48" x2="1189.40" y2="583.48" stroke="#E3E3E3" stroke-width="1.05" />
<line x1="24.20" y1="135.37" x2="82.47" y2="135.37" stroke="#3C3C3C" stroke-width="1.0" /><line x1="24.20" y1="152.60" x2="82.47" y2="152.60" stroke="#3C3C3C" stroke-width="1.0" /><line x1="24.20" y1="135.37" x2="24.20" y2="152.60" stroke="#3C3C3C" stroke-width="1.0" /><line x1="82.47" y1="135.37" x2="82.47" y2="152.60" stroke="#3C3C3C" stroke-width="1.0" />
<line x1="82.47" y1="135.37" x2="140.74" y2="135.37" stroke="#3C3C3C" stroke-width="1.0" /><line x1="82.47" y1="152.60" x2="140.74" y2="152.60" stroke="#3C3C3C" stroke-width="1.0" /><line x1="82.47" y1="135.37" x2="82.47" y2="152.60" stroke="#3C3C3C" stroke-width="1.0" /><line x1="140.74" y1="135.37" x2="140.74" y2="152.60" stroke="#3C3C3C" stroke-width="1.0" />
<line x1="140.74" y1="135.37" x2="199.01" y2="135.37" stroke="#3C3C3C" stroke-width="1.0" /><line x1="140.74" y1="152.60" x2="199.01" y2="152.60" stroke="#3C3C3C" stroke-width="1.0" /><line x1="140.74" y1="135.37" x2="140.74" y2="152.60" stroke="#3C3C3C" stroke-width="1.0" /><line x1="199.01" y1="135.37" x2="199.01" y2="152.60" stroke="#3C3C3C" stroke-width="1.0" />
<line x1="199.01" y1="135.37" x2="257.28" y2="135.37" stroke="#3C3C3C" stroke-width="1.0" /><line x1="199.01" y1="152.60" x2="257.28" y2="152.60" stroke="#3C3C3C" stroke-width="1.0" /><line x1="199.01" y1="135.37" x2="199.01" y2="152.60" stroke="#3C3C3C" stroke-width="1.0" /><line x1="257.28" y1="135.37" x2="257.28" y2="152.60" stroke="#3C3C3C" stroke-width="1.0" />
<line x1="257.28" y1="135.37" x2="315.55" y2="135.37" stroke="#3C3C3C" stroke-width="1.0" /><line x1="257.28" y1="152.60" x2="315.55" y2="152.60" stroke="#3C3C3C" stroke-width="1.0" /><line x1="257.28" y1="135.37" x2="257.28" y2="152.60" stroke="#3C3C3C" stroke-width="1.0" /><line x1="315.55" y1="135.37" x2="315.55" y2="152.60" stroke="#3C3C3C" stroke-width="1.0" />
<line x1="315.55" y1="135.37" x2="373.82" y2="135.37" stroke="#3C3C3C" stroke-width="1.0" /><line x1="315.55" y1="152.60" x2="373.82" y2="152.60" stroke="#3C3C3C" stroke-width="1.0" /><line x1="315.55" y1="135.37" x2="315.55" y2="152.60" stroke="#3C3C3C" stroke-width="1.0" /><line x1="373.82" y1="135.37" x2="373.82" y2="152.60" stroke="#3C3C3C" stroke-width="1.0" />
<line x1="373.82" y1="135.37" x2="432.09" y2="135.37" stroke="#3C3C3C" stroke-width="1.0" /><line x1="373.82" y1="152.60" x2="432.09" y2="152.60" stroke="#3C3C3C" stroke-width="1.0" /><line x1="373.82" y1="135.37" x2="373.82" y2="152.60" stroke="#3C3C3C" stroke-width="1.0" /><line x1="432.09" y1="135.37" x2="432.09" y2="152.60" stroke="#3C3C3C" stroke-width="1.0" />
<line x1="432.09" y1="135.37" x2="490.36" y2="135.37" stroke="#3C3C3C" stroke-width="1.0" /><line x1="432.09" y1="152.60" x2="490.36" y2="152.60" stroke="#3C3C3C" stroke-width="1.0" /><line x1="432.09" y1="135.37" x2="432.09" y2="152.60" stroke="#3C3C3C" stroke-width="1.0" /><line x1="490.36" y1="135.37" x2="490.36" y2="152.60" stroke="#3C3C3C" stroke-width="1.0" />
<line x1="490.36" y1="135.37" x2="548.63" y2="135.37" stroke="#3C3C3C" stroke-width="1.0" /><line x1="490.36" y1="152.60" x2="548.63" y2="152.60" stroke="#3C3C3C" stroke-width="1.0" /><line x1="490.36" y1="135.37" x2="490.36" y2="152.60" stroke="#3C3C3C" stroke-width="1.0" /><line x1="548.63" y1="135.37" x2="548.63" y2="152.60" stroke="#3C3C3C" stroke-width="1.0" />
<line x1="548.63" y1="135.37" x2="606.90" y2="135.37" stroke="#3C3C3C" stroke-width="1.0" /><line x1="548.63" y1="152.60" x2="606.90" y2="152.60" stroke="#3C3C3C" stroke-width="1.0" /><line x1="548.63" y1="135.37" x2="548.63" y2="152.60" stroke="#3C3C3C" stroke-width="1.0" /><line x1="606.90" y1="135.37" x2="606.90" y2="152.60" stroke="#3C3C3C" stroke-width="1.0" />
<line x1="606.90" y1="135.37" x2="665.17" y2="135.37" stroke="#3C3C3C" stroke-width="1.0" /><line x1="606.90" y1="152.60" x2="665.17" y2="152.60" stroke="#3C3C3C" stroke-width="1.0" /><line x1="606.90" y1="135.37" x2="606.90" y2="152.60" stroke="#3C3C3C" stroke-width="1.0" /><line x1="665.17" y1="135.37" x2="665.17" y2="152.60" stroke="#3C3C3C" stroke-width="1.0" />
<line x1="665.17" y1="135.37" x2="723.44" y2="135.37" stroke="#3C3C3C" stroke-width="1.0" /><line x1="665.17" y1="152.60" x2="723.44" y2="152.60" stroke="#3C3C3C" stroke-width="1.0" /><line x1="665.17" y1="135.37" x2="665.17" y2="152.60" stroke="#3C3C3C" stroke-width="1.0" /><line x1="723.44" y1="135.37" x2="723.44" y2="152.60" stroke="#3C3C3C" stroke-width="1.0" />
<line x1="723.44" y1="135.37" x2="781.71" y2="135.37" stroke="#3C3C3C" stroke-width="1.0" /><line x1="723.44" y1="152.60" x2="781.71" y2="152.60" stroke="#3C3C3C" stroke-width="1.0" /><line x1="723.44" y1="135.37" x2="723.44" y2="152.60" stroke="#3C3C3C" stroke-width="1.0" /><line x1="781.71" y1="135.37" x2="781.71" y2="152.60" stroke="#3C3C3C" stroke-width="1.0" />
<line x1="781.71" y1="135.37" x2="839.98" y2="135.37" stroke="#3C3C3C" stroke-width="1.0" /><line x1="781.71" y1="152.60" x2="839.98" y2="152.60" stroke="#3C3C3C" stroke-width="1.0" /><line x1="781.71" y1="135.37" x2="781.71" y2="152.60" stroke="#3C3C3C" stroke-width="1.0" /><line x1="839.98" y1="135.37" x2="839.98" y2="152.60" stroke="#3C3C3C" stroke-width="1.0" />
<line x1="839.98" y1="135.37" x2="898.25" y2="135.37" stroke="#3C3C3C" stroke-width="1.0" /><line x1="839.98" y1="152.60" x2="898.25" y2="152.60" stroke="#3C3C3C" stroke-width="1.0" /><line x1="839.98" y1="135.37" x2="839.98" y2="152.60" stroke="#3C3C3C" stroke-width="1.0" /><line x1="898.25" y1="135.37" x2="898.25" y2="152.60" stroke="#3C3C3C" stroke-width="1.0" />
<line x1="24.20" y1="152.60" x2="82.47" y2="152.60" stroke="#3C3C3C" stroke-width="1.0" /><line x1="24.20" y1="169.83" x2="82.47" y2="169.83" stroke="#3C3C3C" stroke-width="1.0" /><line x1="24.20" y1="152.60" x2="24.20" y2="169.83" stroke="#3C3C3C" stroke-width="1.0" /><line x1="82.47" y1="152.60" x2="82.47" y2="169.83" stroke="#3C3C3C" stroke-width="1.0" />
<line x1="82.47" y1="152.60" x2="140.74" y2="152.60" stroke="#3C3C3C" stroke-width="1.0" /><line x1="82.47" y1="169.83" x2="140.74" y2="169.83" stroke="#3C3C3C" stroke-width="1.0" /><line x1="82.47" y1="152.60" x2="82.47" y2="169.83" stroke="#3C3C3C" stroke-width="1.0" /><line x1="140.74" y1="152.60" x2="140.74" y2="169.83" stroke="#3C3C3C" stroke-width="1.0" />
<line x1="140.74" y1="152.60" x2="199.01" y2="152.60" stroke="#3C3C3C" stroke-width="1.0" /><line x1="140.74" y1="169.83" x2="199.01" y2="169.83" stroke="#3C3C3C" stroke-width="1.0" /><line x1="140.74" y1="152.60" x2="140.74" y2="169.83" stroke="#3C3C3C" stroke-width="1.0" /><line x1="199.01" y1="152.60" x2="199.01" y2="169.83" stroke="#3C3C3C" stroke-width="1.0" />
<line x1="199.01" y1="152.60" x2="257.28" y2="152.60" stroke="#3C3C3C" stroke-width="1.0" /><line x1="199.01" y1="169.83" x2="257.28" y2="169.83" stroke="#3C3C3C" stroke-width="1.0" /><line x1="199.01" y1="152.60" x2="199.01" y2="169.83" stroke="#3C3C3C" stroke-width="1.0" /><line x1="257.28" y1="152.60" x2="257.28" y2="169.83" stroke="#3C3C3C" stroke-width="1.0" />
<line x1="257.28" y1="152.60" x2="315.55" y2="152.60" stroke="#3C3C3C" stroke-width="1.0" /><line x1="257.28" y1="169.83" x2="315.55" y2="169.83" stroke="#3C3C3C" stroke-width="1.0" /><line x1="257.28" y1="152.60" x2="257.28" y2="169.83" stroke="#3C3C3C" stroke-width="1.0" /><line x1="315.55" y1="152.60" x2="315.55" y2="169.83" stroke="#3C3C3C" stroke-width="1.0" />
<line x1="315.55" y1="152.60" x2="373.82" y2="152.60" stroke="#3C3C3C" stroke-width="1.0" /><line x1="315.55" y1="169.83" x2="373.82" y2="169.83" stroke="#3C3C3C" stroke-width="1.0" /><line x1="315.55" y1="152.60" x2="315.55" y2="169.83" stroke="#3C3C3C" stroke-width="1.0" /><line x1="373.82" y1="152.60" x2="373.82" y2="169.83" stroke="#3C3C3C" stroke-width="1.0" />
<line x1="373.82" y1="152.60" x2="432.09" y2="152.60" stroke="#3C3C3C" stroke-width="1.0" /><line x1="373.82" y1="169.83" x2="432.09" y2="169.83" stroke="#3C3C3C" stroke-width="1.0" /><line x1="373.82" y1="152.60" x2="373.82" y2="169.83" stroke="#3C3C3C" stroke-width="1.0" /><line x1="432.09" y1="152.60" x2="432.09" y2="169.83" stroke="#3C3C3C" stroke-width="1.0" />
<line x1="432.09" y1="152.60" x2="490.36" y2="152.60" stroke="#3C3C3C" stroke-width="1.0" /><line x1="432.09" y1="169.83" x2="490.36" y2="169.83" stroke="#3C3C3C" stroke-width="1.0" /><line x1="432.09" y1="152.60" x2="432.09" y2="169.83" stroke="#3C3C3C" stroke-width="1.0" /><line x1="490.36" y1="152.60" x2="490.36" y2="169.83" stroke="#3C3C3C" stroke-width="1.0" />
<line x1="490.36" y1="152.60" x2="548.63" y2="152.60" stroke="#3C3C3C" stroke-width="1.0" /><line x1="490.36" y1="169.83" x2="548.63" y2="169.83" stroke="#3C3C3C" stroke-width="1.0" /><line x1="490.36" y1="152.60" x2="490.36" y2="169.83" stroke="#3C3C3C" stroke-width="1.0" /><line x1="548.63" y1="152.60" x2="548.63" y2="169.83" stroke="#3C3C3C" stroke-width="1.0" />
<line x1="548.63" y1="152.60" x2="606.90" y2="152.60" stroke="#3C3C3C" stroke-width="1.0" /><line x1="548.63" y1="169.83" x2="606.90" y2="169.83" stroke="#3C3C3C" stroke-width="1.0" /><line x1="548.63" y1="152.60" x2="548.63" y2="169.83" stroke="#3C3C3C" stroke-width="1.0" /><line x1="606.90" y1="152.60" x2="606.90" y2="169.83" stroke="#3C3C3C" stroke-width="1.0" />
<line x1="606.90" y1="152.60" x2="665.17" y2="152.60" stroke="#3C3C3C" stroke-width="1.0" /><line x1="606.90" y1="169.83" x2="665.17" y2="169.83" stroke="#3C3C3C" stroke-width="1.0" /><line x1="606.90" y1="152.60" x2="606.90" y2="169.83" stroke="#3C3C3C" stroke-width="1.0" /><line x1="665.17" y1="152.60" x2="665.17" y2="169.83" stroke="#3C3C3C" stroke-width="1.0" />
<line x1="665.17" y1="152.60" x2="723.44" y2="152.60" stroke="#3C3C3C" stroke-width="1.0" /><line x1="665.17" y1="169.83" x2="723.44" y2="169.83" stroke="#3C3C3C" stroke-width="1.0" /><line x1="665.17" y1="152.60" x2="665.17" y2="169.83" stroke="#3C3C3C" stroke-width="1.0" /><line x1="723.44" y1="152.60" x2="723.44" y2="169.83" stroke="#3C3C3C" stroke-width="1.0" />
<line x1="723.44" y1="152.60" x2="781.71" y2="152.60" stroke="#3C3C3C" stroke-width="1.0" /><line x1="723.44" y1="169.83" x2="781.71" y2="169.83" stroke="#3C3C3C" stroke-width="1.0" /><line x1="723.44" y1="152.60" x2="723.44" y2="169.83" stroke="#3C3C3C" stroke-width="1.0" /><line x1="781.71" y1="152.60" x2="781.71" y2="169.83" stroke="#3C3C3C" stroke-width="1.0" />
<line x1="781.71" y1="152.60" x2="839.98" y2="152.60" stroke="#3C3C3C" stroke-width="1.0" /><line x1="781.71" y1="169.83" x2="839.98" y2="169.83" stroke="#3C3C3C" stroke-width="1.0" /><line x1="781.71" y1="152.60" x2="781.71" y2="169.83" stroke="#3C3C3C" stroke-width="1.0" /><line x1="839.98" y1="152.60" x2="839.98" y2="169.83" stroke="#3C3C3C" stroke-width="1.0" />
<line x1="839.98" y1="152.60" x2="898.25" y2="152.60" stroke="#3C3C3C" stroke-width="1.0" /><line x1="839.98" y1="169.83" x2="898.25" y2="169.83" stroke="#3C3C3C" stroke-width="1.0" /><line x1="839.98" y1="152.60" x2="839.98" y2="169.83" stroke="#3C3C3C" stroke-width="1.0" /><line x1="898.25" y1="152.60" x2="898.25" y2="169.83" stroke="#3C3C3C" stroke-width="1.0" />
<line x1="24.20" y1="169.83" x2="82.47" y2="169.83" stroke="#3C3C3C" stroke-width="1.0" /><line x1="24.20" y1="187.07" x2="82.47" y2="187.07" stroke="#3C3C3C" stroke-width="1.0" /><line x1="24.20" y1="169.83" x2="24.20" y2="187.07" stroke="#3C3C3C" stroke-width="1.0" /><line x1="82.47" y1="169.83" x2="82.47" y2="187.07" stroke="#3C3C3C" stroke-width="1.0" />
<line x1="82.47" y1="169.83" x2="140.74" y2="169.83" stroke="#3C3C3C" stroke-width="1.0" /><line x1="82.47" y1="187.07" x2="140.74" y2="187.07" stroke="#3C3C3C" stroke-width="1.0" /><line x1="82.47" y1="169.83" x2="82.47" y2="187.07" stroke="#3C3C3C" stroke-width="1.0" /><line x1="140.74" y1="169.83" x2="140.74" y2="187.07" stroke="#3C3C3C" stroke-width="1.0" />
<line x1="140.74" y1="169.83" x2="199.01" y2="169.83" stroke="#3C3C3C" stroke-width="1.0" /><line x1="140.74" y1="187.07" x2="199.01" y2="187.07" stroke="#3C3C3C" stroke-width="1.0" /><line x1="140.74" y1="169.83" x2="140.74" y2="187.07" stroke="#3C3C3C" stroke-width="1.0" /><line x1="199.01" y1="169.83" x2="199.01" y2="187.07" stroke="#3C3C3C" stroke-width="1.0" />
<line x1="199.01" y1="169.83" x2="257.28" y2="169.83" stroke="#3C3C3C" stroke-width="1.0" /><line x1="199.01" y1="187.07" x2="257.28" y2="187.07" stroke="#3C3C3C" stroke-width="1.0" /><line x1="199.01" y1="169.83" x2="199.01" y2="187.07" stroke="#3C3C3C" stroke-width="1.0" /><line x1="257.28" y1="169.83" x2="257.28" y2="187.07" stroke="#3C3C3C" stroke-width="1.0" />
<line x1="257.28" y1="169.83" x2="315.55" y2="169.83" stroke="#3C3C3C" stroke-width="1.0" /><line x1="257.28" y1="187.07" x2="315.55" y2="187.07" stroke="#3C3C3C" stroke-width="1.0" /><line x1="257.28" y1="169.83" x2="257.28" y2="187.07" stroke="#3C3C3C" stroke-width="1.0" /><line x1="315.55" y1="169.83" x2="315.55" y2="187.07" stroke="#3C3C3C" stroke-width="1.0" />
<line x1="315.55" y1="169.83" x2="373.82" y2="169.83" stroke="#3C3C3C" stroke-width="1.0" /><line x1="315.55" y1="187.07" x2="373.82" y2="187.07" stroke="#3C3C3C" stroke-width="1.0" /><line x1="315.55" y1="169.83" x2="315.55" y2="187.07" stroke="#3C3C3C" stroke-width="1.0" /><line x1="373.82" y1="169.83" x2="373.82" y2="187.07" stroke="#3C3C3C" stroke-width="1.0" />
<line x1="373.82" y1="169.83" x2="432.09" y2="169.83" stroke="#3C3C3C" stroke-width="1.0" /><line x1="373.82" y1="187.07" x2="432.09" y2="187.07" stroke="#3C3C3C" stroke-width="1.0" /><line x1="373.82" y1="169.83" x2="373.82" y2="187.07" stroke="#3C3C3C" stroke-width="1.0" /><line x1="432.09" y1="169.83" x2="432.09" y2="187.07" stroke="#3C3C3C" stroke-width="1.0" />
<line x1="432.09" y1="169.83" x2="490.36" y2="169.83" stroke="#3C3C3C" stroke-width="1.0" /><line x1="432.09" y1="187.07" x2="490.36" y2="187.07" stroke="#3C3C3C" stroke-width="1.0" /><line x1="432.09" y1="169.83" x2="432.09" y2="187.07" stroke="#3C3C3C" stroke-width="1.0" /><line x1="490.36" y1="169.83" x2="490.36" y2="187.07" stroke="#3C3C3C" stroke-width="1.0" />
<line x1="490.36" y1="169.83" x2="548.63" y2="169.83" stroke="#3C3C3C" stroke-width="1.0" /><line x1="490.36" y1="187.07" x2="548.63" y2="187.07" stroke="#3C3C3C" stroke-width="1.0" /><line x1="490.36" y1="169.83" x2="490.36" y2="187.07" stroke="#3C3C3C" stroke-width="1.0" /><line x1="548.63" y1="169.83" x2="548.63" y2="187.07" stroke="#3C3C3C" stroke-width="1.0" />
<line x1="548.63" y1="169.83" x2="606.90" y2="169.83" stroke="#3C3C3C" stroke-width="1.0" /><line x1="548.63" y1="187.07" x2="606.90" y2="187.07" stroke="#3C3C3C" stroke-width="1.0" /><line x1="548.63" y1="169.83" x2="548.63" y2="187.07" stroke="#3C3C3C" stroke-width="1.0" /><line x1="606.90" y1="169.83" x2="606.90" y2="187.07" stroke="#3C3C3C" stroke-width="1.0" />
<line x1="606.90" y1="169.83" x2="665.17" y2="169.83" stroke="#3C3C3C" stroke-width="1.0" /><line x1="606.90" y1="187.07" x2="665.17" y2="187.07" stroke="#3C3C3C" stroke-width="1.0" /><line x1="606.90" y1="169.83" x2="606.90" y2="187.07" stroke="#3C3C3C" stroke-width="1.0" /><line x1="665.17" y1="169.83" x2="665.17" y2="187.07" stroke="#3C3C3C" stroke-width="1.0" />
<line x1="665.17" y1="169.83" x2="723.44" y2="169.83" stroke="#3C3C3C" stroke-width="1.0" /><line x1="665.17" y1="187.07" x2="723.44" y2="187.07" stroke="#3C3C3C" stroke-width="1.0" /><line x1="665.17" y1="169.83" x2="665.17" y2="187.07" stroke="#3C3C3C" stroke-width="1.0" /><line x1="723.44" y1="169.83" x2="723.44" y2="187.07" stroke="#3C3C3C" stroke-width="1.0" />
<line x1="723.44" y1="169.83" x2="781.71" y2="169.83" stroke="#3C3C3C" stroke-width="1.0" /><line x1="723.44" y1="187.07" x2="781.71" y2="187.07" stroke="#3C3C3C" stroke-width="1.0" /><line x1="723.44" y1="169.83" x2="723.44" y2="187.07" stroke="#3C3C3C" stroke-width="1.0" /><line x1="781.71" y1="169.83" x2="781.71" y2="187.07" stroke="#3C3C3C" stroke-width="1.0" />
<line x1="781.71" y1="169.83" x2="839.98" y2="169.83" stroke="#3C3C3C" stroke-width="1.0" /><line x1="781.71" y1="187.07" x2="839.98" y2="187.07" stroke="#3C3C3C" stroke-width="1.0" /><line x1="781.71" y1="169.83" x2="781.71" y2="187.07" stroke="#3C3C3C" stroke-width="1.0" /><line x1="839.98" y1="169.83" x2="839.98" y2="187.07" stroke="#3C3C3C" stroke-width="1.0" />
<line x1="839.98" y1="169.83" x2="898.25" y2="169.83" stroke="#3C3C3C" stroke-width="1.0" /><line x1="839.98" y1="187.07" x2="898.25" y2="187.07" stroke="#3C3C3C" stroke-width="1.0" /><line x1="839.98" y1="169.83" x2="839.98" y2="187.07" stroke="#3C3C3C" stroke-width="1.0" /><line x1="898.25" y1="169.83" x2="898.25" y2="187.07" stroke="#3C3C3C" stroke-width="1.0" />
<line x1="24.20" y1="187.07" x2="82.47" y2="187.07" stroke="#3C3C3C" stroke-width="1.0" /><line x1="24.20" y1="204.31" x2="82.47" y2="204.31" stroke="#3C3C3C" stroke-width="1.0" /><line x1="24.20" y1="187.07" x2="24.20" y2="204.31" stroke="#3C3C3C" stroke-width="1.0" /><line x1="82.47" y1="187.07" x2="82.47" y2="204.31" stroke="#3C3C3C" stroke-width="1.0" />
<line x1="82.47" y1="187.07" x2="140.74" y2="187.07" stroke="#3C3C3C" stroke-width="1.0" /><line x1="82.47" y1="204.31" x2="140.74" y2="204.31" stroke="#3C3C3C" stroke-width="1.0" /><line x1="82.47" y1="187.07" x2="82.47" y2="204.31" stroke="#3C3C3C" stroke-width="1.0" /><line x1="140.74" y1="187.07" x2="140.74" y2="204.31" stroke="#3C3C3C" stroke-width="1.0" />
<line x1="140.74" y1="187.07" x2="199.01" y2="187.07" stroke="#3C3C3C" stroke-width="1.0" /><line x1="140.74" y1="204.31" x2="199.01" y2="204.31" stroke="#3C3C3C" stroke-width="1.0" /><line x1="140.74" y1="187.07" x2="140.74" y2="204.31" stroke="#3C3C3C" stroke-width="1.0" /><line x1="199.01" y1="187.07" x2="199.01" y2="204.31" stroke="#3C3C3C" stroke-width="1.0" />
<line x1="199.01" y1="187.07" x2="257.28" y2="187.07" stroke="#3C3C3C" stroke-width="1.0" /><line x1="199.01" y1="204.31" x2="257.28" y2="204.31" stroke="#3C3C3C" stroke-width="1.0" /><line x1="199.01" y1="187.07" x2="199.01" y2="204.31" stroke="#3C3C3C" stroke-width="1.0" /><line x1="257.28" y1="187.07" x2="257.28" y2="204.31" stroke="#3C3C3C" stroke-width="1.0" />
<line x1="257.28" y1="187.07" x2="315.55" y2="187.07" stroke="#3C3C3C" stroke-width="1.0" /><line x1="257.28" y1="204.31" x2="315.55" y2="204.31" stroke="#3C3C3C" stroke-width="1.0" /><line x1="257.28" y1="187.07" x2="257.28" y2="204.31" stroke="#3C3C3C" stroke-width="1.0" /><line x1="315.55" y1="187.07" x2="315.55" y2="204.31" stroke="#3C3C3C" stroke-width="1.0" />
<line x1="315.55" y1="187.07" x2="373.82" y2="187.07" stroke="#3C3C3C" stroke-width="1.0" /><line x1="315.55" y1="204.31" x2="373.82" y2="204.31" stroke="#3C3C3C" stroke-width="1.0" /><line x1="315.55" y1="187.07" x2="315.55" y2="204.31" stroke="#3C3C3C" stroke-width="1.0" /><line x1="373.82" y1="187.07" x2="373.82" y2="204.31" stroke="#3C3C3C" stroke-width="1.0" />
<line x1="373.82" y1="187.07" x2="432.09" y2="187.07" stroke="#3C3C3C" stroke-width="1.0" /><line x1="373.82" y1="204.31" x2="432.09" y2="204.31" stroke="#3C3C3C" stroke-width="1.0" /><line x1="373.82" y1="187.07" x2="373.82" y2="204.31" stroke="#3C3C3C" stroke-width="1.0" /><line x1="432.09" y1="187.07" x2="432.09" y2="204.31" stroke="#3C3C3C" stroke-width="1.0" />
<line x1="432.09" y1="187.07" x2="490.36" y2="187.07" stroke="#3C3C3C" stroke-width="1.0" /><line x1="432.09" y1="204.31" x2="490.36" y2="204.31" stroke="#3C3C3C" stroke-width="1.0" /><line x1="432.09" y1="187.07" x2="432.09" y2="204.31" stroke="#3C3C3C" stroke-width="1.0" /><line x1="490.36" y1="187.07" x2="490.36" y2="204.31" stroke="#3C3C3C" stroke-width="1.0" />
<line x1="490.36" y1="187.07" x2="548.63" y2="187.07" stroke="#3C3C3C" stroke-width="1.0" /><line x1="490.36" y1="204.31" x2="548.63" y2="204.31" stroke="#3C3C3C" stroke-width="1.0" /><line x1="490.36" y1="187.07" x2="490.36" y2="204.31" stroke="#3C3C3C" stroke-width="1.0" /><line x1="548.63" y1="187.07" x2="548.63" y2="204.31" stroke="#3C3C3C" stroke-width="1.0" />
<line x1="548.63" y1="187.07" x2="606.90" y2="187.07" stroke="#3C3C3C" stroke-width="1.0" /><line x1="548.63" y1="204.31" x2="606.90" y2="204.31" stroke="#3C3C3C" stroke-width="1.0" /><line x1="548.63" y1="187.07" x2="548.63" y2="204.31" stroke="#3C3C3C" stroke-width="1.0" /><line x1="606.90" y1="187.07" x2="606.90" y2="204.31" stroke="#3C3C3C" stroke-width="1.0" />
<line x1="606.90" y1="187.07" x2="665.17" y2="187.07" stroke="#3C3C3C" stroke-width="1.0" /><line x1="606.90" y1="204.31" x2="665.17" y2="204.31" stroke="#3C3C3C" stroke-width="1.0" /><line x1="606.90" y1="187.07" x2="606.90" y2="204.31" stroke="#3C3C3C" stroke-width="1.0" /><line x1="665.17" y1="187.07" x2="665.17" y2="204.31" stroke="#3C3C3C" stroke-width="1.0" />
<line x1="665.17" y1="187.07" x2="723.44" y2="187.07" stroke="#3C3C3C" stroke-width="1.0" /><line x1="665.17" y1="204.31" x2="723.44" y2="204.31" stroke="#3C3C3C" stroke-width="1.0" /><line x1="665.17" y1="187.07" x2="665.17" y2="204.31" stroke="#3C3C3C" stroke-width="1.0" /><line x1="723.44" y1="187.07" x2="723.44" y2="204.31" stroke="#3C3C3C" stroke-width="1.0" />
<line x1="723.44" y1="187.07" x2="781.71" y2="187.07" stroke="#3C3C3C" stroke-width="1.0" /><line x1="723.44" y1="204.31" x2="781.71" y2="204.31" stroke="#3C3C3C" stroke-width="1.0" /><line x1="723.44" y1="187.07" x2="723.44" y2="204.31" stroke="#3C3C3C" stroke-width="1.0" /><line x1="781.71" y1="187.07" x2="781.71" y2="204.31" stroke="#3C3C3C" stroke-width="1.0" />
<line x1="781.71" y1="187.07" x2="839.98" y2="187.07" stroke="#3C3C3C" stroke-width="1.0" /><line x1="781.71" y1="204.31" x2="839.98" y2="204.31" stroke="#3C3C3C" stroke-width="1.0" /><line x1="781.71" y1="187.07" x2="781.71" y2="204.31" stroke="#3C3C3C" stroke-width="1.0" /><line x1="839.98" y1="187.07" x2="839.98" y2="204.31" stroke="#3C3C3C" stroke-width="1.0" />
<line x1="839.98" y1="187.07" x2="898.25" y2="187.07" stroke="#3C3C3C" stroke-width="1.0" /><line x1="839.98" y1="204.31" x2="898.25" y2="204.31" stroke="#3C3C3C" stroke-width="1.0" /><line x1="839.98" y1="187.07" x2="839.98" y2="204.31" stroke="#3C3C3C" stroke-width="1.0" /><line x1="898.25" y1="187.07" x2="898.25" y2="204.31" stroke="#3C3C3C" stroke-width="1.0" />
<line x1="24.20" y1="204.31" x2="82.47" y2="204.31" stroke="#3C3C3C" stroke-width="1.0" /><line x1="24.20" y1="221.54" x2="82.47" y2="221.54" stroke="#3C3C3C" stroke-width="1.0" /><line x1="24.20" y1="204.31" x2="24.20" y2="221.54" stroke="#3C3C3C" stroke-width="1.0" /><line x1="82.47" y1="204.31" x2="82.47" y2="221.54" stroke="#3C3C3C" stroke-width="1.0" />
<line x1="82.47" y1="204.31" x2="140.74" y2="204.31" stroke="#3C3C3C" stroke-width="1.0" /><line x1="82.47" y1="221.54" x2="140.74" y2="221.54" stroke="#3C3C3C" stroke-width="1.0" /><line x1="82.47" y1="204.31" x2="82.47" y2="221.54" stroke="#3C3C3C" stroke-width="1.0" /><line x1="140.74" y1="204.31" x2="140.74" y2="221.54" stroke="#3C3C3C" stroke-width="1.0" />
<line x1="140.74" y1="204.31" x2="199.01" y2="204.31" stroke="#3C3C3C" stroke-width="1.0" /><line x1="140.74" y1="221.54" x2="199.01" y2="221.54" stroke="#3C3C3C" stroke-width="1.0" /><line x1="140.74" y1="204.31" x2="140.74" y2="221.54" stroke="#3C3C3C" stroke-width="1.0" /><line x1="199.01" y1="204.31" x2="199.01" y2="221.54" stroke="#3C3C3C" stroke-width="1.0" />
<line x1="199.01" y1="204.31" x2="257.28" y2="204.31" stroke="#3C3C3C" stroke-width="1.0" /><line x1="199.01" y1="221.54" x2="257.28" y2="221.54" stroke="#3C3C3C" stroke-width="1.0" /><line x1="199.01" y1="204.31" x2="199.01" y2="221.54" stroke="#3C3C3C" stroke-width="1.0" /><line x1="257.28" y1="204.31" x2="257.28" y2="221.54" stroke="#3C3C3C" stroke-width="1.0" />
<line x1="257.28" y1="204.31" x2="315.55" y2="204.31" stroke="#3C3C3C" stroke-width="1.0" /><line x1="257.28" y1="221.54" x2="315.55" y2="221.54" stroke="#3C3C3C" stroke-width="1.0" /><line x1="257.28" y1="204.31" x2="257.28" y2="221.54" stroke="#3C3C3C" stroke-width="1.0" /><line x1="315.55" y1="204.31" x2="315.55" y2="221.54" stroke="#3C3C3C" stroke-width="1.0" />
<line x1="315.55" y1="204.31" x2="373.82" y2="204.31" stroke="#3C3C3C" stroke-width="1.0" /><line x1="315.55" y1="221.54" x2="373.82" y2="221.54" stroke="#3C3C3C" stroke-width="1.0" /><line x1="315.55" y1="204.31" x2="315.55" y2="221.54" stroke="#3C3C3C" stroke-width="1.0" /><line x1="373.82" y1="204.31" x2="373.82" y2="221.54" stroke="#3C3C3C" stroke-width="1.0" />
<line x1="373.82" y1="204.31" x2="432.09" y2="204.31" stroke="#3C3C3C" stroke-width="1.0" /><line x1="373.82" y1="221.54" x2="432.09" y2="221.54" stroke="#3C3C3C" stroke-width="1.0" /><line x1="373.82" y1="204.31" x2="373.82" y2="221.54" stroke="#3C3C3C" stroke-width="1.0" /><line x1="432.09" y1="204.31" x2="432.09" y2="221.54" stroke="#3C3C3C" stroke-width="1.0" />
<line x1="432.09" y1="204.31" x2="490.36" y2="204.31" stroke="#3C3C3C" stroke-width="1.0" /><line x1="432.09" y1="221.54" x2="490.36" y2="221.54" stroke="#3C3C3C" stroke-width="1.0" /><line x1="432.09" y1="204.31" x2="432.09" y2="221.54" stroke="#3C3C3C" stroke-width="1.0" /><line x1="490.36" y1="204.31" x2="490.36" y2="221.54" stroke="#3C3C3C" stroke-width="1.0" />
<line x1="490.36" y1="204.31" x2="548.63" y2="204.31" stroke="#3C3C3C" stroke-width="1.0" /><line x1="490.36" y1="221.54" x2="548.63" y2="221.54" stroke="#3C3C3C" stroke-width="1.0" /><line x1="490.36" y1="204.31" x2="490.36" y2="221.54" stroke="#3C3C3C" stroke-width="1.0" /><line x1="548.63" y1="204.31" x2="548.63" y2="221.54" stroke="#3C3C3C" stroke-width="1.0" />
<line x1="548.63" y1="204.31" x2="606.90" y2="204.31" stroke="#3C3C3C" stroke-width="1.0" /><line x1="548.63" y1="221.54" x2="606.90" y2="221.54" stroke="#3C3C3C" stroke-width="1.0" /><line x1="548.63" y1="204.31" x2="548.63" y2="221.54" stroke="#3C3C3C" stroke-width="1.0" /><line x1="606.90" y1="204.31" x2="606.90" y2="221.54" stroke="#3C3C3C" stroke-width="1.0" />
<line x1="606.90" y1="204.31" x2="665.17" y2="204.31" stroke="#3C3C3C" stroke-width="1.0" /><line x1="606.90" y1="221.54" x2="665.17" y2="221.54" stroke="#3C3C3C" stroke-width="1.0" /><line x1="606.90" y1="204.31" x2="606.90" y2="221.54" stroke="#3C3C3C" stroke-width="1.0" /><line x1="665.17" y1="204.31" x2="665.17" y2="221.54" stroke="#3C3C3C" stroke-width="1.0" />
<line x1="665.17" y1="204.31" x2="723.44" y2="204.31" stroke="#3C3C3C" stroke-width="1.0" /><line x1="665.17" y1="221.54" x2="723.44" y2="221.54" stroke="#3C3C3C" stroke-width="1.0" /><line x1="665.17" y1="204.31" x2="665.17" y2="221.54" stroke="#3C3C3C" stroke-width="1.0" /><line x1="723.44" y1="204.31" x2="723.44" y2="221.54" stroke="#3C3C3C" stroke-width="1.0" />
<line x1="723.44" y1="204.31" x2="781.71" y2="204.31" stroke="#3C3C3C" stroke-width="1.0" /><line x1="723.44" y1="221.54" x2="781.71" y2="221.54" stroke="#3C3C3C" stroke-width="1.0" /><line x1="723.44" y1="204.31" x2="723.44" y2="221.54" stroke="#3C3C3C" stroke-width="1.0" /><line x1="781.71" y1="204.31" x2="781.71" y2="221.54" stroke="#3C3C3C" stroke-width="1.0" />
<line x1="781.71" y1="204.31" x2="839.98" y2="204.31" stroke="#3C3C3C" stroke-width="1.0" /><line x1="781.71" y1="221.54" x2="839.98" y2="221.54" stroke="#3C3C3C" stroke-width="1.0" /><line x1="781.71" y1="204.31" x2="781.71" y2="221.54" stroke="#3C3C3C" stroke-width="1.0" /><line x1="839.98" y1="204.31" x2="839.98" y2="221.54" stroke="#3C3C3C" stroke-width="1.0" />
<line x1="839.98" y1="204.31" x2="898.25" y2="204.31" stroke="#3C3C3C" stroke-width="1.0" /><line x1="839.98" y1="221.54" x2="898.25" y2="221.54" stroke="#3C3C3C" stroke-width="1.0" /><line x1="839.98" y1="204.31" x2="839.98" y2="221.54" stroke="#3C3C3C" stroke-width="1.0" /><line x1="898.25" y1="204.31" x2="898.25" y2="221.54" stroke="#3C3C3C" stroke-width="1.0" />
<line x1="24.20" y1="221.54" x2="82.47" y2="221.54" stroke="#3C3C3C" stroke-width="1.0" /><line x1="24.20" y1="238.77" x2="82.47" y2="238.77" stroke="#3C3C3C" stroke-width="1.0" /><line x1="24.20" y1="221.54" x2="24.20" y2="238.77" stroke="#3C3C3C" stroke-width="1.0" /><line x1="82.47" y1="221.54" x2="82.47" y2="238.77" stroke="#3C3C3C" stroke-width="1.0" />
<line x1="82.47" y1="221.54" x2="140.74" y2="221.54" stroke="#3C3C3C" stroke-width="1.0" /><line x1="82.47" y1="238.77" x2="140.74" y2="238.77" stroke="#3C3C3C" stroke-width="1.0" /><line x1="82.47" y1="221.54" x2="82.47" y2="238.77" stroke="#3C3C3C" stroke-width="1.0" /><line x1="140.74" y1="221.54" x2="140.74" y2="238.77" stroke="#3C3C3C" stroke-width="1.0" />
<line x1="140.74" y1="221.54" x2="199.01" y2="221.54" stroke="#3C3C3C" stroke-width="1.0" /><line x1="140.74" y1="238.77" x2="199.01" y2="238.77" stroke="#3C3C3C" stroke-width="1.0" /><line x1="140.74" y1="221.54" x2="140.74" y2="238.77" stroke="#3C3C3C" stroke-width="1.0" /><line x1="199.01" y1="221.54" x2="199.01" y2="238.77" stroke="#3C3C3C" stroke-width="1.0" />
<line x1="199.01" y1="221.54" x2="257.28" y2="221.54" stroke="#3C3C3C" stroke-width="1.0" /><line x1="199.01" y1="238.77" x2="257.28" y2="238.77" stroke="#3C3C3C" stroke-width="1.0" /><line x1="199.01" y1="221.54" x2="199.01" y2="238.77" stroke="#3C3C3C" stroke-width="1.0" /><line x1="257.28" y1="221.54" x2="257.28" y2="238.77" stroke="#3C3C3C" stroke-width="1.0" />
<line x1="257.28" y1="221.54" x2="315.55" y2="221.54" stroke="#3C3C3C" stroke-width="1.0" /><line x1="257.28" y1="238.77" x2="315.55" y2="238.77" stroke="#3C3C3C" stroke-width="1.0" /><line x1="257.28" y1="221.54" x2="257.28" y2="238.77" stroke="#3C3C3C" stroke-width="1.0" /><line x1="315.55" y1="221.54" x2="315.55" y2="238.77" stroke="#3C3C3C" stroke-width="1.0" />
<line x1="315.55" y1="221.54" x2="373.82" y2="221.54" stroke="#3C3C3C" stroke-width="1.0" /><line x1="315.55" y1="238.77" x2="373.82" y2="238.77" stroke="#3C3C3C" stroke-width="1.0" /><line x1="315.55" y1="221.54" x2="315.55" y2="238.77" stroke="#3C3C3C" stroke-width="1.0" /><line x1="373.82" y1="221.54" x2="373.82" y2="238.77" stroke="#3C3C3C" stroke-width="1.0" />
<line x1="373.82" y1="221.54" x2="432.09" y2="221.54" stroke="#3C3C3C" stroke-width="1.0" /><line x1="373.82" y1="238.77" x2="432.09" y2="238.77" stroke="#3C3C3C" stroke-width="1.0" /><line x1="373.82" y1="221.54" x2="373.82" y2="238.77" stroke="#3C3C3C" stroke-width="1.0" /><line x1="432.09" y1="221.54" x2="432.09" y2="238.77" stroke="#3C3C3C" stroke-width="1.0" />
<line x1="432.09" y1="221.54" x2="490.36" y2="221.54" stroke="#3C3C3C" stroke-width="1.0" /><line x1="432.09" y1="238.77" x2="490.36" y2="238.77" stroke="#3C3C3C" stroke-width="1.0" /><line x1="432.09" y1="221.54" x2="432.09" y2="238.77" stroke="#3C3C3C" stroke-width="1.0" /><line x1="490.36" y1="221.54" x2="490.36" y2="238.77" stroke="#3C3C3C" stroke-width="1.0" />
<line x1="490.36" y1="221.54" x2="548.63" y2="221.54" stroke="#3C3C3C" stroke-width="1.0" /><line x1="490.36" y1="238.77" x2="548.63" y2="238.77" stroke="#3C3C3C" stroke-width="1.0" /><line x1="490.36" y1="221.54" x2="490.36" y2="238.77" stroke="#3C3C3C" stroke-width="1.0" /><line x1="548.63" y1="221.54" x2="548.63" y2="238.77" stroke="#3C3C3C" stroke-width="1.0" />
<line x1="548.63" y1="221.54" x2="606.90" y2="221.54" stroke="#3C3C3C" stroke-width="1.0" /><line x1="548.63" y1="238.77" x2="606.90" y2="238.77" stroke="#3C3C3C" stroke-width="1.0" /><line x1="548.63" y1="221.54" x2="548.63" y2="238.77" stroke="#3C3C3C" stroke-width="1.0" /><line x1="606.90" y1="221.54" x2="606.90" y2="238.77" stroke="#3C3C3C" stroke-width="1.0" />
<line x1="606.90" y1="221.54" x2="665.17" y2="221.54" stroke="#3C3C3C" stroke-width="1.0" /><line x1="606.90" y1="238.77" x2="665.17" y2="238.77" stroke="#3C3C3C" stroke-width="1.0" /><line x1="606.90" y1="221.54" x2="606.90" y2="238.77" stroke="#3C3C3C" stroke-width="1.0" /><line x1="665.17" y1="221.54" x2="665.17" y2="238.77" stroke="#3C3C3C" stroke-width="1.0" />
<line x1="665.17" y1="221.54" x2="723.44" y2="221.54" stroke="#3C3C3C" stroke-width="1.0" /><line x1="665.17" y1="238.77" x2="723.44" y2="238.77" stroke="#3C3C3C" stroke-width="1.0" /><line x1="665.17" y1="221.54" x2="665.17" y2="238.77" stroke="#3C3C3C" stroke-width="1.0" /><line x1="723.44" y1="221.54" x2="723.44" y2="238.77" stroke="#3C3C3C" stroke-width="1.0" />
<line x1="723.44" y1="221.54" x2="781.71" y2="221.54" stroke="#3C3C3C" stroke-width="1.0" /><line x1="723.44" y1="238.77" x2="781.71" y2="238.77" stroke="#3C3C3C" stroke-width="1.0" /><line x1="723.44" y1="221.54" x2="723.44" y2="238.77" stroke="#3C3C3C" stroke-width="1.0" /><line x1="781.71" y1="221.54" x2="781.71" y2="238.77" stroke="#3C3C3C" stroke-width="1.0" />
<line x1="781.71" y1="221.54" x2="839.98" y2="221.54" stroke="#3C3C3C" stroke-width="1.0" /><line x1="781.71" y1="238.77" x2="839.98" y2="238.77" stroke="#3C3C3C" stroke-width="1.0" /><line x1="781.71" y1="221.54" x2="781.71" y2="238.77" stroke="#3C3C3C" stroke-width="1.0" /><line x1="839.98" y1="221.54" x2="839.98" y2="238.77" stroke="#3C3C3C" stroke-width="1.0" />
<line x1="839.98" y1="221.54" x2="898.25" y2="221.54" stroke="#3C3C3C" stroke-width="1.0" /><line x1="839.98" y1="238.77" x2="898.25" y2="238.77" stroke="#3C3C3C" stroke-width="1.0" /><line x1="839.98" y1="221.54" x2="839.98" y2="238.77" stroke="#3C3C3C" stroke-width="1.0" /><line x1="898.25" y1="221.54" x2="898.25" y2="238.77" stroke="#3C3C3C" stroke-width="1.0" />
<line x1="24.20" y1="238.77" x2="82.47" y2="238.77" stroke="#3C3C3C" stroke-width="1.0" /><line x1="24.20" y1="256.01" x2="82.47" y2="256.01" stroke="#3C3C3C" stroke-width="1.0" /><line x1="24.20" y1="238.77" x2="24.20" y2="256.01" stroke="#3C3C3C" stroke-width="1.0" /><line x1="82.47" y1="238.77" x2="82.47" y2="256.01" stroke="#3C3C3C" stroke-width="1.0" />
<line x1="82.47" y1="238.77" x2="140.74" y2="238.77" stroke="#3C3C3C" stroke-width="1.0" /><line x1="82.47" y1="256.01" x2="140.74" y2="256.01" stroke="#3C3C3C" stroke-width="1.0" /><line x1="82.47" y1="238.77" x2="82.47" y2="256.01" stroke="#3C3C3C" stroke-width="1.0" /><line x1="140.74" y1="238.77" x2="140.74" y2="256.01" stroke="#3C3C3C" stroke-width="1.0" />
<line x1="140.74" y1="238.77" x2="199.01" y2="238.77" stroke="#3C3C3C" stroke-width="1.0" /><line x1="140.74" y1="256.01" x2="199.01" y2="256.01" stroke="#3C3C3C" stroke-width="1.0" /><line x1="140.74" y1="238.77" x2="140.74" y2="256.01" stroke="#3C3C3C" stroke-width="1.0" /><line x1="199.01" y1="238.77" x2="199.01" y2="256.01" stroke="#3C3C3C" stroke-width="1.0" />
<line x1="199.01" y1="238.77" x2="257.28" y2="238.77" stroke="#3C3C3C" stroke-width="1.0" /><line x1="199.01" y1="256.01" x2="257.28" y2="256.01" stroke="#3C3C3C" stroke-width="1.0" /><line x1="199.01" y1="238.77" x2="199.01" y2="256.01" stroke="#3C3C3C" stroke-width="1.0" /><line x1="257.28" y1="238.77" x2="257.28" y2="256.01" stroke="#3C3C3C" stroke-width="1.0" />
<line x1="257.28" y1="238.77" x2="315.55" y2="238.77" stroke="#3C3C3C" stroke-width="1.0" /><line x1="257.28" y1="256.01" x2="315.55" y2="256.01" stroke="#3C3C3C" stroke-width="1.0" /><line x1="257.28" y1="238.77" x2="257.28" y2="256.01" stroke="#3C3C3C" stroke-width="1.0" /><line x1="315.55" y1="238.77" x2="315.55" y2="256.01" stroke="#3C3C3C" stroke-width="1.0" />
<line x1="315.55" y1="238.77" x2="373.82" y2="238.77" stroke="#3C3C3C" stroke-width="1.0" /><line x1="315.55" y1="256.01" x2="373.82" y2="256.01" stroke="#3C3C3C" stroke-width="1.0" /><line x1="315.55" y1="238.77" x2="315.55" y2="256.01" stroke="#3C3C3C" stroke-width="1.0" /><line x1="373.82" y1="238.77" x2="373.82" y2="256.01" stroke="#3C3C3C" stroke-width="1.0" />
<line x1="373.82" y1="238.77" x2="432.09" y2="238.77" stroke="#3C3C3C" stroke-width="1.0" /><line x1="373.82" y1="256.01" x2="432.09" y2="256.01" stroke="#3C3C3C" stroke-width="1.0" /><line x1="373.82" y1="238.77" x2="373.82" y2="256.01" stroke="#3C3C3C" stroke-width="1.0" /><line x1="432.09" y1="238.77" x2="432.09" y2="256.01" stroke="#3C3C3C" stroke-width="1.0" />
<line x1="432.09" y1="238.77" x2="490.36" y2="238.77" stroke="#3C3C3C" stroke-width="1.0" /><line x1="432.09" y1="256.01" x2="490.36" y2="256.01" stroke="#3C3C3C" stroke-width="1.0" /><line x1="432.09" y1="238.77" x2="432.09" y2="256.01" stroke="#3C3C3C" stroke-width="1.0" /><line x1="490.36" y1="238.77" x2="490.36" y2="256.01" stroke="#3C3C3C" stroke-width="1.0" />
<line x1="490.36" y1="238.77" x2="548.63" y2="238.77" stroke="#3C3C3C" stroke-width="1.0" /><line x1="490.36" y1="256.01" x2="548.63" y2="256.01" stroke="#3C3C3C" stroke-width="1.0" /><line x1="490.36" y1="238.77" x2="490.36" y2="256.01" stroke="#3C3C3C" stroke-width="1.0" /><line x1="548.63" y1="238.77" x2="548.63" y2="256.01" stroke="#3C3C3C" stroke-width="1.0" />
<line x1="548.63" y1="238.77" x2="606.90" y2="238.77" stroke="#3C3C3C" stroke-width="1.0" /><line x1="548.63" y1="256.01" x2="606.90" y2="256.01" stroke="#3C3C3C" stroke-width="1.0" /><line x1="548.63" y1="238.77" x2="548.63" y2="256.01" stroke="#3C3C3C" stroke-width="1.0" /><line x1="606.90" y1="238.77" x2="606.90" y2="256.01" stroke="#3C3C3C" stroke-width="1.0" />
<line x1="606.90" y1="238.77" x2="665.17" y2="238.77" stroke="#3C3C3C" stroke-width="1.0" /><line x1="606.90" y1="256.01" x2="665.17" y2="256.01" stroke="#3C3C3C" stroke-width="1.0" /><line x1="606.90" y1="238.77" x2="606.90" y2="256.01" stroke="#3C3C3C" stroke-width="1.0" /><line x1="665.17" y1="238.77" x2="665.17" y2="256.01" stroke="#3C3C3C" stroke-width="1.0" />
<line x1="665.17" y1="238.77" x2="723.44" y2="238.77" stroke="#3C3C3C" stroke-width="1.0" /><line x1="665.17" y1="256.01" x2="723.44" y2="256.01" stroke="#3C3C3C" stroke-width="1.0" /><line x1="665.17" y1="238.77" x2="665.17" y2="256.01" stroke="#3C3C3C" stroke-width="1.0" /><line x1="723.44" y1="238.77" x2="723.44" y2="256.01" stroke="#3C3C3C" stroke-width="1.0" />
<line x1="723.44" y1="238.77" x2="781.71" y2="238.77" stroke="#3C3C3C" stroke-width="1.0" /><line x1="723.44" y1="256.01" x2="781.71" y2="256.01" stroke="#3C3C3C" stroke-width="1.0" /><line x1="723.44" y1="238.77" x2="723.44" y2="256.01" stroke="#3C3C3C" stroke-width="1.0" /><line x1="781.71" y1="238.77" x2="781.71" y2="256.01" stroke="#3C3C3C" stroke-width="1.0" />
<line x1="781.71" y1="238.77" x2="839.98" y2="238.77" stroke="#3C3C3C" stroke-width="1.0" /><line x1="781.71" y1="256.01" x2="839.98" y2="256.01" stroke="#3C3C3C" stroke-width="1.0" /><line x1="781.71" y1="238.77" x2="781.71" y2="256.01" stroke="#3C3C3C" stroke-width="1.0" /><line x1="839.98" y1="238.77" x2="839.98" y2="256.01" stroke="#3C3C3C" stroke-width="1.0" />
<line x1="839.98" y1="238.77" x2="898.25" y2="238.77" stroke="#3C3C3C" stroke-width="1.0" /><line x1="839.98" y1="256.01" x2="898.25" y2="256.01" stroke="#3C3C3C" stroke-width="1.0" /><line x1="839.98" y1="238.77" x2="839.98" y2="256.01" stroke="#3C3C3C" stroke-width="1.0" /><line x1="898.25" y1="238.77" x2="898.25" y2="256.01" stroke="#3C3C3C" stroke-width="1.0" />
<line x1="82.47" y1="273.25" x2="140.74" y2="273.25" stroke="#3C3C3C" stroke-width="1.0" /><line x1="82.47" y1="290.48" x2="140.74" y2="290.48" stroke="#3C3C3C" stroke-width="1.0" /><line x1="82.47" y1="273.25" x2="82.47" y2="290.48" stroke="#3C3C3C" stroke-width="1.0" /><line x1="140.74" y1="273.25" x2="140.74" y2="290.48" stroke="#3C3C3C" stroke-width="1.0" />
<line x1="140.74" y1="273.25" x2="199.01" y2="273.25" stroke="#3C3C3C" stroke-width="1.0" /><line x1="140.74" y1="290.48" x2="199.01" y2="290.48" stroke="#3C3C3C" stroke-width="1.0" /><line x1="140.74" y1="273.25" x2="140.74" y2="290.48" stroke="#3C3C3C" stroke-width="1.0" /><line x1="199.01" y1="273.25" x2="199.01" y2="290.48" stroke="#3C3C3C" stroke-width="1.0" />
<line x1="199.01" y1="273.25" x2="257.28" y2="273.25" stroke="#3C3C3C" stroke-width="1.0" /><line x1="199.01" y1="290.48" x2="257.28" y2="290.48" stroke="#3C3C3C" stroke-width="1.0" /><line x1="199.01" y1="273.25" x2="199.01" y2="290.48" stroke="#3C3C3C" stroke-width="1.0" /><line x1="257.28" y1="273.25" x2="257.28" y2="290.48" stroke="#3C3C3C" stroke-width="1.0" />
<line x1="257.28" y1="273.25" x2="315.55" y2="273.25" stroke="#3C3C3C" stroke-width="1.0" /><line x1="257.28" y1="290.48" x2="315.55" y2="290.48" stroke="#3C3C3C" stroke-width="1.0" /><line x1="257.28" y1="273.25" x2="257.28" y2="290.48" stroke="#3C3C3C" stroke-width="1.0" /><line x1="315.55" y1="273.25" x2="315.55" y2="290.48" stroke="#3C3C3C" stroke-width="1.0" />
<line x1="315.55" y1="273.25" x2="373.82" y2="273.25" stroke="#3C3C3C" stroke-width="1.0" /><line x1="315.55" y1="290.48" x2="373.82" y2="290.48" stroke="#3C3C3C" stroke-width="1.0" /><line x1="315.55" y1="273.25" x2="315.55" y2="290.48" stroke="#3C3C3C" stroke-width="1.0" /><line x1="373.82" y1="273.25" x2="373.82" y2="290.48" stroke="#3C3C3C" stroke-width="1.0" />
<line x1="373.82" y1="273.25" x2="432.09" y2="273.25" stroke="#3C3C3C" stroke-width="1.0" /><line x1="373.82" y1="290.48" x2="432.09" y2="290.48" stroke="#3C3C3C" stroke-width="1.0" /><line x1="373.82" y1="273.25" x2="373.82" y2="290.48" stroke="#3C3C3C" stroke-width="1.0" /><line x1="432.09" y1="273.25" x2="432.09" y2="290.48" stroke="#3C3C3C" stroke-width="1.0" />
<line x1="432.09" y1="273.25" x2="490.36" y2="273.25" stroke="#3C3C3C" stroke-width="1.0" /><line x1="432.09" y1="290.48" x2="490.36" y2="290.48" stroke="#3C3C3C" stroke-width="1.0" /><line x1="432.09" y1="273.25" x2="432.09" y2="290.48" stroke="#3C3C3C" stroke-width="1.0" /><line x1="490.36" y1="273.25" x2="490.36" y2="290.48" stroke="#3C3C3C" stroke-width="1.0" />
<line x1="490.36" y1="273.25" x2="548.63" y2="273.25" stroke="#3C3C3C" stroke-width="1.0" /><line x1="490.36" y1="290.48" x2="548.63" y2="290.48" stroke="#3C3C3C" stroke-width="1.0" /><line x1="490.36" y1="273.25" x2="490.36" y2="290.48" stroke="#3C3C3C" stroke-width="1.0" /><line x1="548.63" y1="273.25" x2="548.63" y2="290.48" stroke="#3C3C3C" stroke-width="1.0" />
<line x1="548.63" y1="273.25" x2="606.90" y2="273.25" stroke="#3C3C3C" stroke-width="1.0" /><line x1="548.63" y1="290.48" x2="606.90" y2="290.48" stroke="#3C3C3C" stroke-width="1.0" /><line x1="548.63" y1="273.25" x2="548.63" y2="290.48" stroke="#3C3C3C" stroke-width="1.0" /><line x1="606.90" y1="273.25" x2="606.90" y2="290.48" stroke="#3C3C3C" stroke-width="1.0" />
<line x1="606.90" y1="273.25" x2="665.17" y2="273.25" stroke="#3C3C3C" stroke-width="1.0" /><line x1="606.90" y1="290.48" x2="665.17" y2="290.48" stroke="#3C3C3C" stroke-width="1.0" /><line x1="606.90" y1="273.25" x2="606.90" y2="290.48" stroke="#3C3C3C" stroke-width="1.0" /><line x1="665.17" y1="273.25" x2="665.17" y2="290.48" stroke="#3C3C3C" stroke-width="1.0" />
<line x1="665.17" y1="273.25" x2="723.44" y2="273.25" stroke="#3C3C3C" stroke-width="1.0" /><line x1="665.17" y1="290.48" x2="723.44" y2="290.48" stroke="#3C3C3C" stroke-width="1.0" /><line x1="665.17" y1="273.25" x2="665.17" y2="290.48" stroke="#3C3C3C" stroke-width="1.0" /><line x1="723.44" y1="273.25" x2="723.44" y2="290.48" stroke="#3C3C3C" stroke-width="1.0" />
<line x1="723.44" y1="273.25" x2="781.71" y2="273.25" stroke="#3C3C3C" stroke-width="1.0" /><line x1="723.44" y1="290.48" x2="781.71" y2="290.48" stroke="#3C3C3C" stroke-width="1.0" /><line x1="723.44" y1="273.25" x2="723.44" y2="290.48" stroke="#3C3C3C" stroke-width="1.0" /><line x1="781.71" y1="273.25" x2="781.71" y2="290.48" stroke="#3C3C3C" stroke-width="1.0" />
<line x1="781.71" y1="273.25" x2="839.98" y2="273.25" stroke="#3C3C3C" stroke-width="1.0" /><line x1="781.71" y1="290.48" x2="839.98" y2="290.48" stroke="#3C3C3C" stroke-width="1.0" /><line x1="781.71" y1="273.25" x2="781.71" y2="290.48" stroke="#3C3C3C" stroke-width="1.0" /><line x1="839.98" y1="273.25" x2="839.98" y2="290.48" stroke="#3C3C3C" stroke-width="1.0" />
<line x1="839.98" y1="273.25" x2="898.25" y2="273.25" stroke="#3C3C3C" stroke-width="1.0" /><line x1="839.98" y1="290.48" x2="898.25" y2="290.48" stroke="#3C3C3C" stroke-width="1.0" /><line x1="839.98" y1="273.25" x2="839.98" y2="290.48" stroke="#3C3C3C" stroke-width="1.0" /><line x1="898.25" y1="273.25" x2="898.25" y2="290.48" stroke="#3C3C3C" stroke-width="1.0" />
<line x1="1014.79" y1="135.37" x2="1073.06" y2="135.37" stroke="#3C3C3C" stroke-width="1.0" /><line x1="1014.79" y1="152.60" x2="1073.06" y2="152.60" stroke="#3C3C3C" stroke-width="1.0" /><line x1="1014.79" y1="135.37" x2="1014.79" y2="152.60" stroke="#3C3C3C" stroke-width="1.0" /><line x1="1073.06" y1="135.37" x2="1073.06" y2="152.60" stroke="#3C3C3C" stroke-width="1.0" />
<line x1="1073.06" y1="135.37" x2="1131.33" y2="135.37" stroke="#3C3C3C" stroke-width="1.0" /><line x1="1073.06" y1="152.60" x2="1131.33" y2="152.60" stroke="#3C3C3C" stroke-width="1.0" /><line x1="1073.06" y1="135.37" x2="1073.06" y2="152.60" stroke="#3C3C3C" stroke-width="1.0" /><line x1="1131.33" y1="135.37" x2="1131.33" y2="152.60" stroke="#3C3C3C" stroke-width="1.0" />
<line x1="1014.79" y1="152.60" x2="1073.06" y2="152.60" stroke="#3C3C3C" stroke-width="1.0" /><line x1="1014.79" y1="169.83" x2="1073.06" y2="169.83" stroke="#3C3C3C" stroke-width="1.0" /><line x1="1014.79" y1="152.60" x2="1014.79" y2="169.83" stroke="#3C3C3C" stroke-width="1.0" /><line x1="1073.06" y1="152.60" x2="1073.06" y2="169.83" stroke="#3C3C3C" stroke-width="1.0" />
<line x1="1073.06" y1="152.60" x2="1131.33" y2="152.60" stroke="#3C3C3C" stroke-width="1.0" /><line x1="1073.06" y1="169.83" x2="1131.33" y2="169.83" stroke="#3C3C3C" stroke-width="1.0" /><line x1="1073.06" y1="152.60" x2="1073.06" y2="169.83" stroke="#3C3C3C" stroke-width="1.0" /><line x1="1131.33" y1="152.60" x2="1131.33" y2="169.83" stroke="#3C3C3C" stroke-width="1.0" />
<line x1="1014.79" y1="169.83" x2="1073.06" y2="169.83" stroke="#3C3C3C" stroke-width="1.0" /><line x1="1014.79" y1="187.07" x2="1073.06" y2="187.07" stroke="#3C3C3C" stroke-width="1.0" /><line x1="1014.79" y1="169.83" x2="1014.79" y2="187.07" stroke="#3C3C3C" stroke-width="1.0" /><line x1="1073.06" y1="169.83" x2="1073.06" y2="187.07" stroke="#3C3C3C" stroke-width="1.0" />
<line x1="1073.06" y1="169.83" x2="1131.33" y2="169.83" stroke="#3C3C3C" stroke-width="1.0" /><line x1="1073.06" y1="187.07" x2="1131.33" y2="187.07" stroke="#3C3C3C" stroke-width="1.0" /><line x1="1073.06" y1="169.83" x2="1073.06" y2="187.07" stroke="#3C3C3C" stroke-width="1.0" /><line x1="1131.33" y1="169.83" x2="1131.33" y2="187.07" stroke="#3C3C3C" stroke-width="1.0" />
<line x1="1014.79" y1="187.07" x2="1073.06" y2="187.07" stroke="#3C3C3C" stroke-width="1.0" /><line x1="1014.79" y1="204.31" x2="1073.06" y2="204.31" stroke="#3C3C3C" stroke-width="1.0" /><line x1="1014.79" y1="187.07" x2="1014.79" y2="204.31" stroke="#3C3C3C" stroke-width="1.0" /><line x1="1073.06" y1="187.07" x2="1073.06" y2="204.31" stroke="#3C3C3C" stroke-width="1.0" />
<line x1="1073.06" y1="187.07" x2="1131.33" y2="187.07" stroke="#3C3C3C" stroke-width="1.0" /><line x1="1073.06" y1="204.31" x2="1131.33" y2="204.31" stroke="#3C3C3C" stroke-width="1.0" /><line x1="1073.06" y1="187.07" x2="1073.06" y2="204.31" stroke="#3C3C3C" stroke-width="1.0" /><line x1="1131.33" y1="187.07" x2="1131.33" y2="204.31" stroke="#3C3C3C" stroke-width="1.0" />
<line x1="1014.79" y1="204.31" x2="1073.06" y2="204.31" stroke="#3C3C3C" stroke-width="1.0" /><line x1="1014.79" y1="221.54" x2="1073.06" y2="221.54" stroke="#3C3C3C" stroke-width="1.0" /><line x1="1014.79" y1="204.31" x2="1014.79" y2="221.54" stroke="#3C3C3C" stroke-width="1.0" /><line x1="1073.06" y1="204.31" x2="1073.06" y2="221.54" stroke="#3C3C3C" stroke-width="1.0" />
<line x1="1073.06" y1="204.31" x2="1131.33" y2="204.31" stroke="#3C3C3C" stroke-width="1.0" /><line x1="1073.06" y1="221.54" x2="1131.33" y2="221.54" stroke="#3C3C3C" stroke-width="1.0" /><line x1="1073.06" y1="204.31" x2="1073.06" y2="221.54" stroke="#3C3C3C" stroke-width="1.0" /><line x1="1131.33" y1="204.31" x2="1131.33" y2="221.54" stroke="#3C3C3C" stroke-width="1.0" />
<line x1="1014.79" y1="221.54" x2="1073.06" y2="221.54" stroke="#3C3C3C" stroke-width="1.0" /><line x1="1014.79" y1="238.77" x2="1073.06" y2="238.77" stroke="#3C3C3C" stroke-width="1.0" /><line x1="1014.79" y1="221.54" x2="1014.79" y2="238.77" stroke="#3C3C3C" stroke-width="1.0" /><line x1="1073.06" y1="221.54" x2="1073.06" y2="238.77" stroke="#3C3C3C" stroke-width="1.0" />
<line x1="1073.06" y1="221.54" x2="1131.33" y2="221.54" stroke="#3C3C3C" stroke-width="1.0" /><line x1="1073.06" y1="238.77" x2="1131.33" y2="238.77" stroke="#3C3C3C" stroke-width="1.0" /><line x1="1073.06" y1="221.54" x2="1073.06" y2="238.77" stroke="#3C3C3C" stroke-width="1.0" /><line x1="1131.33" y1="221.54" x2="1131.33" y2="238.77" stroke="#3C3C3C" stroke-width="1.0" />
<defs>
<clipPath id="c0_1"><rect x="24.80" y="135.37" width="57.07" height="17.23"/></clipPath>
<clipPath id="c1_1"><rect x="83.07" y="135.37" width="57.07" height="17.23"/></clipPath>
<clipPath id="c2_1"><rect x="141.34" y="135.37" width="57.07" height="17.23"/></clipPath>
<clipPath id="c3_1"><rect x="199.61" y="135.37" width="57.07" height="17.23"/></clipPath>
<clipPath id="c4_1"><rect x="257.88" y="135.37" width="57.07" height="17.23"/></clipPath>
<clipPath id="c5_1"><rect x="316.15" y="135.37" width="57.07" height="17.23"/></clipPath>
<clipPath id="c6_1"><rect x="374.42" y="135.37" width="57.07" height="17.23"/></clipPath>
<clipPath id="c7_1"><rect x="432.69" y="135.37" width="57.07" height="17.23"/></clipPath>
<clipPath id="c8_1"><rect x="490.96" y="135.37" width="57.07" height="17.23"/></clipPath>
<clipPath id="c9_1"><rect x="549.23" y="135.37" width="57.07" height="17.23"/></clipPath>
<clipPath id="c10_1"><rect x="607.50" y="135.37" width="57.07" height="17.23"/></clipPath>
<clipPath id="c11_1"><rect x="665.77" y="135.37" width="57.07" height="17.23"/></clipPath>
<clipPath id="c12_1"><rect x="724.04" y="135.37" width="57.07" height="17.23"/></clipPath>
<clipPath id="c13_1"><rect x="782.31" y="135.37" width="57.07" height="17.23"/></clipPath>
<clipPath id="c14_1"><rect x="840.58" y="135.37" width="57.07" height="17.23"/></clipPath>
<clipPath id="c0_2"><rect x="24.80" y="152.60" width="57.07" height="17.23"/></clipPath>
<clipPath id="c1_2"><rect x="83.07" y="152.60" width="57.07" height="17.23"/></clipPath>
<clipPath id="c2_2"><rect x="141.34" y="152.60" width="57.07" height="17.23"/></clipPath>
<clipPath id="c3_2"><rect x="199.61" y="152.60" width="57.07" height="17.23"/></clipPath>
<clipPath id="c4_2"><rect x="257.88" y="152.60" width="57.07" height="17.23"/></clipPath>
<clipPath id="c5_2"><rect x="316.15" y="152.60" width="57.07" height="17.23"/></clipPath>
<clipPath id="c6_2"><rect x="374.42" y="152.60" width="57.07" height="17.23"/></clipPath>
<clipPath id="c7_2"><rect x="432.69" y="152.60" width="57.07" height="17.23"/></clipPath>
<clipPath id="c8_2"><rect x="490.96" y="152.60" width="57.07" height="17.23"/></clipPath>
<clipPath id="c9_2"><rect x="549.23" y="152.60" width="57.07" height="17.23"/></clipPath>
<clipPath id="c10_2"><rect x="607.50" y="152.60" width="57.07" height="17.23"/></clipPath>
<clipPath id="c11_2"><rect x="665.77" y="152.60" width="57.07" height="17.23"/></clipPath>
<clipPath id="c12_2"><rect x="724.04" y="152.60" width="57.07" height="17.23"/></clipPath>
<clipPath id="c13_2"><rect x="782.31" y="152.60" width="57.07" height="17.23"/></clipPath>
<clipPath id="c14_2"><rect x="840.58" y="152.60" width="57.07" height="17.23"/></clipPath>
<clipPath id="c0_3"><rect x="24.80" y="169.83" width="57.07" height="17.23"/></clipPath>
<clipPath id="c1_3"><rect x="83.07" y="169.83" width="57.07" height="17.23"/></clipPath>
<clipPath id="c2_3"><rect x="141.34" y="169.83" width="57.07" height="17.23"/></clipPath>
<clipPath id="c3_3"><rect x="199.61" y="169.83" width="57.07" height="17.23"/></clipPath>
<clipPath id="c4_3"><rect x="257.88" y="169.83" width="57.07" height="17.23"/></clipPath>
<clipPath id="c5_3"><rect x="316.15" y="169.83" width="57.07" height="17.23"/></clipPath>
<clipPath id="c6_3"><rect x="374.42" y="169.83" width="57.07" height="17.23"/></clipPath>
<clipPath id="c7_3"><rect x="432.69" y="169.83" width="57.07" height="17.23"/></clipPath>
<clipPath id="c8_3"><rect x="490.96" y="169.83" width="57.07" height="17.23"/></clipPath>
<clipPath id="c9_3"><rect x="549.23" y="169.83" width="57.07" height="17.23"/></clipPath>
<clipPath id="c10_3"><rect x="607.50" y="169.83" width="57.07" height="17.23"/></clipPath>
<clipPath id="c11_3"><rect x="665.77" y="169.83" width="57.07" height="17.23"/></clipPath>
<clipPath id="c12_3"><rect x="724.04" y="169.83" width="57.07" height="17.23"/></clipPath>
<clipPath id="c13_3"><rect x="782.31" y="169.83" width="57.07" height="17.23"/></clipPath>
<clipPath id="c14_3"><rect x="840.58" y="169.83" width="57.07" height="17.23"/></clipPath>
<clipPath id="c0_4"><rect x="24.80" y="187.07" width="57.07" height="17.23"/></clipPath>
<clipPath id="c1_4"><rect x="83.07" y="187.07" width="57.07" height="17.23"/></clipPath>
<clipPath id="c2_4"><rect x="141.34" y="187.07" width="57.07" height="17.23"/></clipPath>
<clipPath id="c3_4"><rect x="199.61" y="187.07" width="57.07" height="17.23"/></clipPath>
<clipPath id="c4_4"><rect x="257.88" y="187.07" width="57.07" height="17.23"/></clipPath>
<clipPath id="c5_4"><rect x="316.15" y="187.07" width="57.07" height="17.23"/></clipPath>
<clipPath id="c6_4"><rect x="374.42" y="187.07" width="57.07" height="17.23"/></clipPath>
<clipPath id="c7_4"><rect x="432.69" y="187.07" width="57.07" height="17.23"/></clipPath>
<clipPath id="c8_4"><rect x="490.96" y="187.07" width="57.07" height="17.23"/></clipPath>
<clipPath id="c9_4"><rect x="549.23" y="187.07" width="57.07" height="17.23"/></clipPath>
<clipPath id="c10_4"><rect x="607.50" y="187.07" width="57.07" height="17.23"/></clipPath>
<clipPath id="c11_4"><rect x="665.77" y="187.07" width="57.07" height="17.23"/></clipPath>
<clipPath id="c12_4"><rect x="724.04" y="187.07" width="57.07" height="17.23"/></clipPath>
<clipPath id="c13_4"><rect x="782.31" y="187.07" width="57.07" height="17.23"/></clipPath>
<clipPath id="c14_4"><rect x="840.58" y="187.07" width="57.07" height="17.23"/></clipPath>
<clipPath id="c0_5"><rect x="24.80" y="204.31" width="57.07" height="17.23"/></clipPath>
<clipPath id="c1_5"><rect x="83.07" y="204.31" width="57.07" height="17.23"/></clipPath>
<clipPath id="c2_5"><rect x="141.34" y="204.31" width="57.07" height="17.23"/></clipPath>
<clipPath id="c3_5"><rect x="199.61" y="204.31" width="57.07" height="17.23"/></clipPath>
<clipPath id="c4_5"><rect x="257.88" y="204.31" width="57.07" height="17.23"/></clipPath>
<clipPath id="c5_5"><rect x="316.15" y="204.31" width="57.07" height="17.23"/></clipPath>
<clipPath id="c6_5"><rect x="374.42" y="204.31" width="57.07" height="17.23"/></clipPath>
<clipPath id="c7_5"><rect x="432.69" y="204.31" width="57.07" height="17.23"/></clipPath>
<clipPath id="c8_5"><rect x="490.96" y="204.31" width="57.07" height="17.23"/></clipPath>
<clipPath id="c9_5"><rect x="549.23" y="204.31" width="57.07" height="17.23"/></clipPath>
<clipPath id="c10_5"><rect x="607.50" y="204.31" width="57.07" height="17.23"/></clipPath>
<clipPath id="c11_5"><rect x="665.77" y="204.31" width="57.07" height="17.23"/></clipPath>
<clipPath id="c12_5"><rect x="724.04" y="204.31" width="57.07" height="17.23"/></clipPath>
<clipPath id="c13_5"><rect x="782.31" y="204.31" width="57.07" height="17.23"/></clipPath>
<clipPath id="c14_5"><rect x="840.58" y="204.31" width="57.07" height="17.23"/></clipPath>
<clipPath id="c0_6"><rect x="24.80" y="221.54" width="57.07" height="17.23"/></clipPath>
<clipPath id="c1_6"><rect x="83.07" y="221.54" width="57.07" height="17.23"/></clipPath>
<clipPath id="c2_6"><rect x="141.34" y="221.54" width="57.07" height="17.23"/></clipPath>
<clipPath id="c3_6"><rect x="199.61" y="221.54" width="57.07" height="17.23"/></clipPath>
<clipPath id="c4_6"><rect x="257.88" y="221.54" width="57.07" height="17.23"/></clipPath>
<clipPath id="c5_6"><rect x="316.15" y="221.54" width="57.07" height="17.23"/></clipPath>
<clipPath id="c6_6"><rect x="374.42" y="221.54" width="57.07" height="17.23"/></clipPath>
<clipPath id="c7_6"><rect x="432.69" y="221.54" width="57.07" height="17.23"/></clipPath>
<clipPath id="c8_6"><rect x="490.96" y="221.54" width="57.07" height="17.23"/></clipPath>
<clipPath id="c9_6"><rect x="549.23" y="221.54" width="57.07" height="17.23"/></clipPath>
<clipPath id="c10_6"><rect x="607.50" y="221.54" width="57.07" height="17.23"/></clipPath>
<clipPath id="c11_6"><rect x="665.77" y="221.54" width="57.07" height="17.23"/></clipPath>
<clipPath id="c12_6"><rect x="724.04" y="221.54" width="57.07" height="17.23"/></clipPath>
<clipPath id="c13_6"><rect x="782.31" y="221.54" width="57.07" height="17.23"/></clipPath>
<clipPath id="c14_6"><rect x="840.58" y="221.54" width="57.07" height="17.23"/></clipPath>
<clipPath id="c0_7"><rect x="24.80" y="238.77" width="57.07" height="17.23"/></clipPath>
<clipPath id="c1_7"><rect x="83.07" y="238.77" width="57.07" height="17.23"/></clipPath>
<clipPath id="c2_7"><rect x="141.34" y="238.77" width="57.07" height="17.23"/></clipPath>
<clipPath id="c3_7"><rect x="199.61" y="238.77" width="57.07" height="17.23"/></clipPath>
<clipPath id="c4_7"><rect x="257.88" y="238.77" width="57.07" height="17.23"/></clipPath>
<clipPath id="c5_7"><rect x="316.15" y="238.77" width="57.07" height="17.23"/></clipPath>
<clipPath id="c6_7"><rect x="374.42" y="238.77" width="57.07" height="17.23"/></clipPath>
<clipPath id="c7_7"><rect x="432.69" y="238.77" width="57.07" height="17.23"/></clipPath>
<clipPath id="c8_7"><rect x="490.96" y="238.77" width="57.07" height="17.23"/></clipPath>
<clipPath id="c9_7"><rect x="549.23" y="238.77" width="57.07" height="17.23"/></clipPath>
<clipPath id="c10_7"><rect x="607.50" y="238.77" width="57.07" height="17.23"/></clipPath>
<clipPath id="c11_7"><rect x="665.77" y="238.77" width="57.07" height="17.23"/></clipPath>
<clipPath id="c12_7"><rect x="724.04" y="238.77" width="57.07" height="17.23"/></clipPath>
<clipPath id="c13_7"><rect x="782.31" y="238.77" width="57.07" height="17.23"/></clipPath>
<clipPath id="c14_7"><rect x="840.58" y="238.77" width="57.07" height="17.23"/></clipPath>
<clipPath id="c1_9"><rect x="83.07" y="273.25" width="57.07" height="17.23"/></clipPath>
<clipPath id="c2_9"><rect x="141.34" y="273.25" width="57.07" height="17.23"/></clipPath>
<clipPath id="c3_9"><rect x="199.61" y="273.25" width="57.07" height="17.23"/></clipPath>
<clipPath id="c4_9"><rect x="257.88" y="273.25" width="57.07" height="17.23"/></clipPath>
<clipPath id="c5_9"><rect x="316.15" y="273.25" width="57.07" height="17.23"/></clipPath>
<clipPath id="c6_9"><rect x="374.42" y="273.25" width="57.07" height="17.23"/></clipPath>
<clipPath id="c7_9"><rect x="432.69" y="273.25" width="57.07" height="17.23"/></clipPath>
<clipPath id="c8_9"><rect x="490.96" y="273.25" width="57.07" height="17.23"/></clipPath>
<clipPath id="c9_9"><rect x="549.23" y="273.25" width="57.07" height="17.23"/></clipPath>
<clipPath id="c10_9"><rect x="607.50" y="273.25" width="57.07" height="17.23"/></clipPath>
<clipPath id="c11_9"><rect x="665.77" y="273.25" width="57.07" height="17.23"/></clipPath>
<clipPath id="c12_9"><rect x="724.04" y="273.25" width="57.07" height="17.23"/></clipPath>
<clipPath id="c13_9"><rect x="782.31" y="273.25" width="57.07" height="17.23"/></clipPath>
<clipPath id="c14_9"><rect x="840.58" y="273.25" width="57.07" height="17.23"/></clipPath>
<clipPath id="c17_1"><rect x="1015.39" y="135.37" width="57.07" height="17.23"/></clipPath>
<clipPath id="c18_1"><rect x="1073.66" y="135.37" width="57.07" height="17.23"/></clipPath>
<clipPath id="c17_2"><rect x="1015.39" y="152.60" width="57.07" height="17.23"/></clipPath>
<clipPath id="c18_2"><rect x="1073.66" y="152.60" width="57.07" height="17.23"/></clipPath>
<clipPath id="c17_3"><rect x="1015.39" y="169.83" width="57.07" height="17.23"/></clipPath>
<clipPath id="c18_3"><rect x="1073.66" y="169.83" width="57.07" height="17.23"/></clipPath>
<clipPath id="c17_4"><rect x="1015.39" y="187.07" width="57.07" height="17.23"/></clipPath>
<clipPath id="c18_4"><rect x="1073.66" y="187.07" width="57.07" height="17.23"/></clipPath>
<clipPath id="c17_5"><rect x="1015.39" y="204.31" width="57.07" height="17.23"/></clipPath>
<clipPath id="c18_5"><rect x="1073.66" y="204.31" width="57.07" height="17.23"/></clipPath>
<clipPath id="c17_6"><rect x="1015.39" y="221.54" width="57.07" height="17.23"/></clipPath>
<clipPath id="c18_6"><rect x="1073.66" y="221.54" width="57.07" height="17.23"/></clipPath>
</defs>
<g clip-path="url(#c0_1)"><text transform="translate(26.50,148.50) scale(0.975,1)" font-size="11.6" fill="#000" font-weight="bold" text-anchor="start" stroke="#000" stroke-width="0.12">Item</text></g>
<g clip-path="url(#c1_1)"><text transform="translate(84.77,148.50) scale(0.975,1)" font-size="11.6" fill="#000" font-weight="bold" text-anchor="start" stroke="#000" stroke-width="0.12">Category</text></g>
<g clip-path="url(#c2_1)"><text transform="translate(143.04,148.50) scale(0.975,1)" font-size="11.6" fill="#000" font-weight="bold" text-anchor="start" stroke="#000" stroke-width="0.12">January</text></g>
<g clip-path="url(#c3_1)"><text transform="translate(201.31,148.50) scale(0.975,1)" font-size="11.6" fill="#000" font-weight="bold" text-anchor="start" stroke="#000" stroke-width="0.12">February</text></g>
<g clip-path="url(#c4_1)"><text transform="translate(259.58,148.50) scale(0.975,1)" font-size="11.6" fill="#000" font-weight="bold" text-anchor="start" stroke="#000" stroke-width="0.12">March</text></g>
<g clip-path="url(#c5_1)"><text transform="translate(317.85,148.50) scale(0.975,1)" font-size="11.6" fill="#000" font-weight="bold" text-anchor="start" stroke="#000" stroke-width="0.12">April</text></g>
<g clip-path="url(#c6_1)"><text transform="translate(376.12,148.50) scale(0.975,1)" font-size="11.6" fill="#000" font-weight="bold" text-anchor="start" stroke="#000" stroke-width="0.12">May</text></g>
<g clip-path="url(#c7_1)"><text transform="translate(434.39,148.50) scale(0.975,1)" font-size="11.6" fill="#000" font-weight="bold" text-anchor="start" stroke="#000" stroke-width="0.12">June</text></g>
<g clip-path="url(#c8_1)"><text transform="translate(492.66,148.50) scale(0.975,1)" font-size="11.6" fill="#000" font-weight="bold" text-anchor="start" stroke="#000" stroke-width="0.12">July</text></g>
<g clip-path="url(#c9_1)"><text transform="translate(550.93,148.50) scale(0.975,1)" font-size="11.6" fill="#000" font-weight="bold" text-anchor="start" stroke="#000" stroke-width="0.12">August</text></g>
<g clip-path="url(#c10_1)"><text transform="translate(609.20,148.50) scale(0.975,1)" font-size="11.6" fill="#000" font-weight="bold" text-anchor="start" stroke="#000" stroke-width="0.12">September</text></g>
<g clip-path="url(#c11_1)"><text transform="translate(667.47,148.50) scale(0.975,1)" font-size="11.6" fill="#000" font-weight="bold" text-anchor="start" stroke="#000" stroke-width="0.12">October</text></g>
<g clip-path="url(#c12_1)"><text transform="translate(725.74,148.50) scale(0.975,1)" font-size="11.6" fill="#000" font-weight="bold" text-anchor="start" stroke="#000" stroke-width="0.12">November</text></g>
<g clip-path="url(#c13_1)"><text transform="translate(784.01,148.50) scale(0.975,1)" font-size="11.6" fill="#000" font-weight="bold" text-anchor="start" stroke="#000" stroke-width="0.12">December</text></g>
<g clip-path="url(#c14_1)"><text transform="translate(842.28,148.50) scale(0.975,1)" font-size="11.6" fill="#000" font-weight="bold" text-anchor="start" stroke="#000" stroke-width="0.12">Total</text></g>
<g clip-path="url(#c0_2)"><text transform="translate(26.50,165.73) scale(1.015,1)" font-size="11.6" fill="#000" font-weight="normal" text-anchor="start" stroke="#000" stroke-width="0.22">Advertising</text></g>
<g clip-path="url(#c1_2)"><text transform="translate(84.77,165.73) scale(1.015,1)" font-size="11.6" fill="#000" font-weight="normal" text-anchor="start" stroke="#000" stroke-width="0.22">Customer Acquisition</text></g>
<g clip-path="url(#c2_2)"><text transform="translate(196.21,165.73) scale(1.05,1)" font-size="11.6" fill="#000" font-weight="normal" text-anchor="end" stroke="#000" stroke-width="0.22">$234</text></g>
<g clip-path="url(#c3_2)"><text transform="translate(254.48,165.73) scale(1.05,1)" font-size="11.6" fill="#000" font-weight="normal" text-anchor="end" stroke="#000" stroke-width="0.22">$597</text></g>
<g clip-path="url(#c4_2)"><text transform="translate(312.75,165.73) scale(1.05,1)" font-size="11.6" fill="#000" font-weight="normal" text-anchor="end" stroke="#000" stroke-width="0.22">$550</text></g>
<g clip-path="url(#c5_2)"><text transform="translate(371.02,165.73) scale(1.05,1)" font-size="11.6" fill="#000" font-weight="normal" text-anchor="end" stroke="#000" stroke-width="0.22">$1.000</text></g>
<g clip-path="url(#c6_2)"><text transform="translate(429.29,165.73) scale(1.05,1)" font-size="11.6" fill="#000" font-weight="normal" text-anchor="end" stroke="#000" stroke-width="0.22">$650</text></g>
<g clip-path="url(#c7_2)"><text transform="translate(487.56,165.73) scale(1.05,1)" font-size="11.6" fill="#000" font-weight="normal" text-anchor="end" stroke="#000" stroke-width="0.22">$200</text></g>
<g clip-path="url(#c8_2)"><text transform="translate(545.83,165.73) scale(1.05,1)" font-size="11.6" fill="#000" font-weight="normal" text-anchor="end" stroke="#000" stroke-width="0.22">$700</text></g>
<g clip-path="url(#c9_2)"><text transform="translate(604.10,165.73) scale(1.05,1)" font-size="11.6" fill="#000" font-weight="normal" text-anchor="end" stroke="#000" stroke-width="0.22">$750</text></g>
<g clip-path="url(#c10_2)"><text transform="translate(662.37,165.73) scale(1.05,1)" font-size="11.6" fill="#000" font-weight="normal" text-anchor="end" stroke="#000" stroke-width="0.22">$800</text></g>
<g clip-path="url(#c11_2)"><text transform="translate(720.64,165.73) scale(1.05,1)" font-size="11.6" fill="#000" font-weight="normal" text-anchor="end" stroke="#000" stroke-width="0.22">$850</text></g>
<g clip-path="url(#c12_2)"><text transform="translate(778.91,165.73) scale(1.05,1)" font-size="11.6" fill="#000" font-weight="normal" text-anchor="end" stroke="#000" stroke-width="0.22">$900</text></g>
<g clip-path="url(#c13_2)"><text transform="translate(837.18,165.73) scale(1.05,1)" font-size="11.6" fill="#000" font-weight="normal" text-anchor="end" stroke="#000" stroke-width="0.22">$950</text></g>
<g clip-path="url(#c14_2)"><text transform="translate(895.45,165.73) scale(1.065,1)" font-size="11.6" fill="#000" font-weight="bold" text-anchor="end" stroke="#000" stroke-width="0.12">$8.181</text></g>
<g clip-path="url(#c0_3)"><text transform="translate(26.50,182.97) scale(1.015,1)" font-size="11.6" fill="#000" font-weight="normal" text-anchor="start" stroke="#000" stroke-width="0.22">Commission</text></g>
<g clip-path="url(#c1_3)"><text transform="translate(84.77,182.97) scale(1.015,1)" font-size="11.6" fill="#000" font-weight="normal" text-anchor="start" stroke="#000" stroke-width="0.22">Miscellaneous</text></g>
<g clip-path="url(#c2_3)"><text transform="translate(196.21,182.97) scale(1.05,1)" font-size="11.6" fill="#000" font-weight="normal" text-anchor="end" stroke="#000" stroke-width="0.22">$149</text></g>
<g clip-path="url(#c3_3)"><text transform="translate(254.48,182.97) scale(1.05,1)" font-size="11.6" fill="#000" font-weight="normal" text-anchor="end" stroke="#000" stroke-width="0.22">$200</text></g>
<g clip-path="url(#c4_3)"><text transform="translate(312.75,182.97) scale(1.05,1)" font-size="11.6" fill="#000" font-weight="normal" text-anchor="end" stroke="#000" stroke-width="0.22">$250</text></g>
<g clip-path="url(#c5_3)"><text transform="translate(371.02,182.97) scale(1.05,1)" font-size="11.6" fill="#000" font-weight="normal" text-anchor="end" stroke="#000" stroke-width="0.22">$245</text></g>
<g clip-path="url(#c6_3)"><text transform="translate(429.29,182.97) scale(1.05,1)" font-size="11.6" fill="#000" font-weight="normal" text-anchor="end" stroke="#000" stroke-width="0.22">$350</text></g>
<g clip-path="url(#c7_3)"><text transform="translate(487.56,182.97) scale(1.05,1)" font-size="11.6" fill="#000" font-weight="normal" text-anchor="end" stroke="#000" stroke-width="0.22">$400</text></g>
<g clip-path="url(#c8_3)"><text transform="translate(545.83,182.97) scale(1.05,1)" font-size="11.6" fill="#000" font-weight="normal" text-anchor="end" stroke="#000" stroke-width="0.22">$450</text></g>
<g clip-path="url(#c9_3)"><text transform="translate(604.10,182.97) scale(1.05,1)" font-size="11.6" fill="#000" font-weight="normal" text-anchor="end" stroke="#000" stroke-width="0.22">$550</text></g>
<g clip-path="url(#c10_3)"><text transform="translate(662.37,182.97) scale(1.05,1)" font-size="11.6" fill="#000" font-weight="normal" text-anchor="end" stroke="#000" stroke-width="0.22">$550</text></g>
<g clip-path="url(#c11_3)"><text transform="translate(720.64,182.97) scale(1.05,1)" font-size="11.6" fill="#000" font-weight="normal" text-anchor="end" stroke="#000" stroke-width="0.22">$600</text></g>
<g clip-path="url(#c12_3)"><text transform="translate(778.91,182.97) scale(1.05,1)" font-size="11.6" fill="#000" font-weight="normal" text-anchor="end" stroke="#000" stroke-width="0.22">$650</text></g>
<g clip-path="url(#c13_3)"><text transform="translate(837.18,182.97) scale(1.05,1)" font-size="11.6" fill="#000" font-weight="normal" text-anchor="end" stroke="#000" stroke-width="0.22">$700</text></g>
<g clip-path="url(#c14_3)"><text transform="translate(895.45,182.97) scale(1.065,1)" font-size="11.6" fill="#000" font-weight="bold" text-anchor="end" stroke="#000" stroke-width="0.12">$5.094</text></g>
<g clip-path="url(#c0_4)"><text transform="translate(26.50,200.21) scale(1.015,1)" font-size="11.6" fill="#000" font-weight="normal" text-anchor="start" stroke="#000" stroke-width="0.22">Office Expenses</text></g>
<g clip-path="url(#c1_4)"><text transform="translate(84.77,200.21) scale(1.015,1)" font-size="11.6" fill="#000" font-weight="normal" text-anchor="start" stroke="#000" stroke-width="0.22">Administrative</text></g>
<g clip-path="url(#c2_4)"><text transform="translate(196.21,200.21) scale(1.05,1)" font-size="11.6" fill="#000" font-weight="normal" text-anchor="end" stroke="#000" stroke-width="0.22">$179</text></g>
<g clip-path="url(#c3_4)"><text transform="translate(254.48,200.21) scale(1.05,1)" font-size="11.6" fill="#000" font-weight="normal" text-anchor="end" stroke="#000" stroke-width="0.22">$220</text></g>
<g clip-path="url(#c4_4)"><text transform="translate(312.75,200.21) scale(1.05,1)" font-size="11.6" fill="#000" font-weight="normal" text-anchor="end" stroke="#000" stroke-width="0.22">$240</text></g>
<g clip-path="url(#c5_4)"><text transform="translate(371.02,200.21) scale(1.05,1)" font-size="11.6" fill="#000" font-weight="normal" text-anchor="end" stroke="#000" stroke-width="0.22">$260</text></g>
<g clip-path="url(#c6_4)"><text transform="translate(429.29,200.21) scale(1.05,1)" font-size="11.6" fill="#000" font-weight="normal" text-anchor="end" stroke="#000" stroke-width="0.22">$280</text></g>
<g clip-path="url(#c7_4)"><text transform="translate(487.56,200.21) scale(1.05,1)" font-size="11.6" fill="#000" font-weight="normal" text-anchor="end" stroke="#000" stroke-width="0.22">$300</text></g>
<g clip-path="url(#c8_4)"><text transform="translate(545.83,200.21) scale(1.05,1)" font-size="11.6" fill="#000" font-weight="normal" text-anchor="end" stroke="#000" stroke-width="0.22">$320</text></g>
<g clip-path="url(#c9_4)"><text transform="translate(604.10,200.21) scale(1.05,1)" font-size="11.6" fill="#000" font-weight="normal" text-anchor="end" stroke="#000" stroke-width="0.22">$340</text></g>
<g clip-path="url(#c10_4)"><text transform="translate(662.37,200.21) scale(1.05,1)" font-size="11.6" fill="#000" font-weight="normal" text-anchor="end" stroke="#000" stroke-width="0.22">$360</text></g>
<g clip-path="url(#c11_4)"><text transform="translate(720.64,200.21) scale(1.05,1)" font-size="11.6" fill="#000" font-weight="normal" text-anchor="end" stroke="#000" stroke-width="0.22">$380</text></g>
<g clip-path="url(#c12_4)"><text transform="translate(778.91,200.21) scale(1.05,1)" font-size="11.6" fill="#000" font-weight="normal" text-anchor="end" stroke="#000" stroke-width="0.22">$400</text></g>
<g clip-path="url(#c13_4)"><text transform="translate(837.18,200.21) scale(1.05,1)" font-size="11.6" fill="#000" font-weight="normal" text-anchor="end" stroke="#000" stroke-width="0.22">$420</text></g>
<g clip-path="url(#c14_4)"><text transform="translate(895.45,200.21) scale(1.065,1)" font-size="11.6" fill="#000" font-weight="bold" text-anchor="end" stroke="#000" stroke-width="0.12">$3.699</text></g>
<g clip-path="url(#c0_5)"><text transform="translate(26.50,217.44) scale(1.015,1)" font-size="11.6" fill="#000" font-weight="normal" text-anchor="start" stroke="#000" stroke-width="0.22">Cost of Labor</text></g>
<g clip-path="url(#c1_5)"><text transform="translate(84.77,217.44) scale(1.015,1)" font-size="11.6" fill="#000" font-weight="normal" text-anchor="start" stroke="#000" stroke-width="0.22">Cost of Goods</text></g>
<g clip-path="url(#c2_5)"><text transform="translate(196.21,217.44) scale(1.05,1)" font-size="11.6" fill="#000" font-weight="normal" text-anchor="end" stroke="#000" stroke-width="0.22">$1.780</text></g>
<g clip-path="url(#c3_5)"><text transform="translate(254.48,217.44) scale(1.05,1)" font-size="11.6" fill="#000" font-weight="normal" text-anchor="end" stroke="#000" stroke-width="0.22">$2.113</text></g>
<g clip-path="url(#c4_5)"><text transform="translate(312.75,217.44) scale(1.05,1)" font-size="11.6" fill="#000" font-weight="normal" text-anchor="end" stroke="#000" stroke-width="0.22">$2.200</text></g>
<g clip-path="url(#c5_5)"><text transform="translate(371.02,217.44) scale(1.05,1)" font-size="11.6" fill="#000" font-weight="normal" text-anchor="end" stroke="#000" stroke-width="0.22">$1.003</text></g>
<g clip-path="url(#c6_5)"><text transform="translate(429.29,217.44) scale(1.05,1)" font-size="11.6" fill="#000" font-weight="normal" text-anchor="end" stroke="#000" stroke-width="0.22">$2.400</text></g>
<g clip-path="url(#c7_5)"><text transform="translate(487.56,217.44) scale(1.05,1)" font-size="11.6" fill="#000" font-weight="normal" text-anchor="end" stroke="#000" stroke-width="0.22">$1.050</text></g>
<g clip-path="url(#c8_5)"><text transform="translate(545.83,217.44) scale(1.05,1)" font-size="11.6" fill="#000" font-weight="normal" text-anchor="end" stroke="#000" stroke-width="0.22">$2.600</text></g>
<g clip-path="url(#c9_5)"><text transform="translate(604.10,217.44) scale(1.05,1)" font-size="11.6" fill="#000" font-weight="normal" text-anchor="end" stroke="#000" stroke-width="0.22">$2.700</text></g>
<g clip-path="url(#c10_5)"><text transform="translate(662.37,217.44) scale(1.05,1)" font-size="11.6" fill="#000" font-weight="normal" text-anchor="end" stroke="#000" stroke-width="0.22">$2.800</text></g>
<g clip-path="url(#c11_5)"><text transform="translate(720.64,217.44) scale(1.05,1)" font-size="11.6" fill="#000" font-weight="normal" text-anchor="end" stroke="#000" stroke-width="0.22">$2.900</text></g>
<g clip-path="url(#c12_5)"><text transform="translate(778.91,217.44) scale(1.05,1)" font-size="11.6" fill="#000" font-weight="normal" text-anchor="end" stroke="#000" stroke-width="0.22">$3.000</text></g>
<g clip-path="url(#c13_5)"><text transform="translate(837.18,217.44) scale(1.05,1)" font-size="11.6" fill="#000" font-weight="normal" text-anchor="end" stroke="#000" stroke-width="0.22">$4.100</text></g>
<g clip-path="url(#c14_5)"><text transform="translate(895.45,217.44) scale(1.065,1)" font-size="11.6" fill="#000" font-weight="bold" text-anchor="end" stroke="#000" stroke-width="0.12">$28.646</text></g>
<g clip-path="url(#c0_6)"><text transform="translate(26.50,234.67) scale(1.015,1)" font-size="11.6" fill="#000" font-weight="normal" text-anchor="start" stroke="#000" stroke-width="0.22">Airfare</text></g>
<g clip-path="url(#c1_6)"><text transform="translate(84.77,234.67) scale(1.015,1)" font-size="11.6" fill="#000" font-weight="normal" text-anchor="start" stroke="#000" stroke-width="0.22">Travel</text></g>
<g clip-path="url(#c2_6)"><text transform="translate(196.21,234.67) scale(1.05,1)" font-size="11.6" fill="#000" font-weight="normal" text-anchor="end" stroke="#000" stroke-width="0.22">$400</text></g>
<g clip-path="url(#c3_6)"><text transform="translate(254.48,234.67) scale(1.05,1)" font-size="11.6" fill="#000" font-weight="normal" text-anchor="end" stroke="#000" stroke-width="0.22">$450</text></g>
<g clip-path="url(#c4_6)"><text transform="translate(312.75,234.67) scale(1.05,1)" font-size="11.6" fill="#000" font-weight="normal" text-anchor="end" stroke="#000" stroke-width="0.22">$500</text></g>
<g clip-path="url(#c5_6)"><text transform="translate(371.02,234.67) scale(1.05,1)" font-size="11.6" fill="#000" font-weight="normal" text-anchor="end" stroke="#000" stroke-width="0.22">$0</text></g>
<g clip-path="url(#c6_6)"><text transform="translate(429.29,234.67) scale(1.05,1)" font-size="11.6" fill="#000" font-weight="normal" text-anchor="end" stroke="#000" stroke-width="0.22">$600</text></g>
<g clip-path="url(#c7_6)"><text transform="translate(487.56,234.67) scale(1.05,1)" font-size="11.6" fill="#000" font-weight="normal" text-anchor="end" stroke="#000" stroke-width="0.22">$650</text></g>
<g clip-path="url(#c8_6)"><text transform="translate(545.83,234.67) scale(1.05,1)" font-size="11.6" fill="#000" font-weight="normal" text-anchor="end" stroke="#000" stroke-width="0.22">$700</text></g>
<g clip-path="url(#c9_6)"><text transform="translate(604.10,234.67) scale(1.05,1)" font-size="11.6" fill="#000" font-weight="normal" text-anchor="end" stroke="#000" stroke-width="0.22">$750</text></g>
<g clip-path="url(#c10_6)"><text transform="translate(662.37,234.67) scale(1.05,1)" font-size="11.6" fill="#000" font-weight="normal" text-anchor="end" stroke="#000" stroke-width="0.22">$800</text></g>
<g clip-path="url(#c11_6)"><text transform="translate(720.64,234.67) scale(1.05,1)" font-size="11.6" fill="#000" font-weight="normal" text-anchor="end" stroke="#000" stroke-width="0.22">$850</text></g>
<g clip-path="url(#c12_6)"><text transform="translate(778.91,234.67) scale(1.05,1)" font-size="11.6" fill="#000" font-weight="normal" text-anchor="end" stroke="#000" stroke-width="0.22">$900</text></g>
<g clip-path="url(#c13_6)"><text transform="translate(837.18,234.67) scale(1.05,1)" font-size="11.6" fill="#000" font-weight="normal" text-anchor="end" stroke="#000" stroke-width="0.22">$950</text></g>
<g clip-path="url(#c14_6)"><text transform="translate(895.45,234.67) scale(1.065,1)" font-size="11.6" fill="#000" font-weight="bold" text-anchor="end" stroke="#000" stroke-width="0.12">$7.550</text></g>
<g clip-path="url(#c0_7)"><text transform="translate(26.50,251.91) scale(1.015,1)" font-size="11.6" fill="#000" font-weight="normal" text-anchor="start" stroke="#000" stroke-width="0.22">Hotel</text></g>
<g clip-path="url(#c1_7)"><text transform="translate(84.77,251.91) scale(1.015,1)" font-size="11.6" fill="#000" font-weight="normal" text-anchor="start" stroke="#000" stroke-width="0.22">Travel</text></g>
<g clip-path="url(#c2_7)"><text transform="translate(196.21,251.91) scale(1.05,1)" font-size="11.6" fill="#000" font-weight="normal" text-anchor="end" stroke="#000" stroke-width="0.22">$300</text></g>
<g clip-path="url(#c3_7)"><text transform="translate(254.48,251.91) scale(1.05,1)" font-size="11.6" fill="#000" font-weight="normal" text-anchor="end" stroke="#000" stroke-width="0.22">$350</text></g>
<g clip-path="url(#c4_7)"><text transform="translate(312.75,251.91) scale(1.05,1)" font-size="11.6" fill="#000" font-weight="normal" text-anchor="end" stroke="#000" stroke-width="0.22">$400</text></g>
<g clip-path="url(#c5_7)"><text transform="translate(371.02,251.91) scale(1.05,1)" font-size="11.6" fill="#000" font-weight="normal" text-anchor="end" stroke="#000" stroke-width="0.22">$450</text></g>
<g clip-path="url(#c6_7)"><text transform="translate(429.29,251.91) scale(1.05,1)" font-size="11.6" fill="#000" font-weight="normal" text-anchor="end" stroke="#000" stroke-width="0.22">$500</text></g>
<g clip-path="url(#c7_7)"><text transform="translate(487.56,251.91) scale(1.05,1)" font-size="11.6" fill="#000" font-weight="normal" text-anchor="end" stroke="#000" stroke-width="0.22">$550</text></g>
<g clip-path="url(#c8_7)"><text transform="translate(545.83,251.91) scale(1.05,1)" font-size="11.6" fill="#000" font-weight="normal" text-anchor="end" stroke="#000" stroke-width="0.22">$300</text></g>
<g clip-path="url(#c9_7)"><text transform="translate(604.10,251.91) scale(1.05,1)" font-size="11.6" fill="#000" font-weight="normal" text-anchor="end" stroke="#000" stroke-width="0.22">$650</text></g>
<g clip-path="url(#c10_7)"><text transform="translate(662.37,251.91) scale(1.05,1)" font-size="11.6" fill="#000" font-weight="normal" text-anchor="end" stroke="#000" stroke-width="0.22">$700</text></g>
<g clip-path="url(#c11_7)"><text transform="translate(720.64,251.91) scale(1.05,1)" font-size="11.6" fill="#000" font-weight="normal" text-anchor="end" stroke="#000" stroke-width="0.22">$750</text></g>
<g clip-path="url(#c12_7)"><text transform="translate(778.91,251.91) scale(1.05,1)" font-size="11.6" fill="#000" font-weight="normal" text-anchor="end" stroke="#000" stroke-width="0.22">$300</text></g>
<g clip-path="url(#c13_7)"><text transform="translate(837.18,251.91) scale(1.05,1)" font-size="11.6" fill="#000" font-weight="normal" text-anchor="end" stroke="#000" stroke-width="0.22">$850</text></g>
<g clip-path="url(#c14_7)"><text transform="translate(895.45,251.91) scale(1.065,1)" font-size="11.6" fill="#000" font-weight="bold" text-anchor="end" stroke="#000" stroke-width="0.12">$6.100</text></g>
<g clip-path="url(#c1_9)"><text transform="translate(84.77,286.38) scale(0.975,1)" font-size="11.6" fill="#000" font-weight="bold" text-anchor="start" stroke="#000" stroke-width="0.12">Monthly Total</text></g>
<g clip-path="url(#c2_9)"><text transform="translate(196.21,286.38) scale(1.065,1)" font-size="11.6" fill="#000" font-weight="bold" text-anchor="end" stroke="#000" stroke-width="0.12">$3.042</text></g>
<g clip-path="url(#c3_9)"><text transform="translate(254.48,286.38) scale(1.065,1)" font-size="11.6" fill="#000" font-weight="bold" text-anchor="end" stroke="#000" stroke-width="0.12">$3.930</text></g>
<g clip-path="url(#c4_9)"><text transform="translate(312.75,286.38) scale(1.065,1)" font-size="11.6" fill="#000" font-weight="bold" text-anchor="end" stroke="#000" stroke-width="0.12">$4.140</text></g>
<g clip-path="url(#c5_9)"><text transform="translate(371.02,286.38) scale(1.065,1)" font-size="11.6" fill="#000" font-weight="bold" text-anchor="end" stroke="#000" stroke-width="0.12">$2.958</text></g>
<g clip-path="url(#c6_9)"><text transform="translate(429.29,286.38) scale(1.065,1)" font-size="11.6" fill="#000" font-weight="bold" text-anchor="end" stroke="#000" stroke-width="0.12">$4.780</text></g>
<g clip-path="url(#c7_9)"><text transform="translate(487.56,286.38) scale(1.065,1)" font-size="11.6" fill="#000" font-weight="bold" text-anchor="end" stroke="#000" stroke-width="0.12">$3.150</text></g>
<g clip-path="url(#c8_9)"><text transform="translate(545.83,286.38) scale(1.065,1)" font-size="11.6" fill="#000" font-weight="bold" text-anchor="end" stroke="#000" stroke-width="0.12">$5.070</text></g>
<g clip-path="url(#c9_9)"><text transform="translate(604.10,286.38) scale(1.065,1)" font-size="11.6" fill="#000" font-weight="bold" text-anchor="end" stroke="#000" stroke-width="0.12">$5.740</text></g>
<g clip-path="url(#c10_9)"><text transform="translate(662.37,286.38) scale(1.065,1)" font-size="11.6" fill="#000" font-weight="bold" text-anchor="end" stroke="#000" stroke-width="0.12">$6.010</text></g>
<g clip-path="url(#c11_9)"><text transform="translate(720.64,286.38) scale(1.065,1)" font-size="11.6" fill="#000" font-weight="bold" text-anchor="end" stroke="#000" stroke-width="0.12">$6.330</text></g>
<g clip-path="url(#c12_9)"><text transform="translate(778.91,286.38) scale(1.065,1)" font-size="11.6" fill="#000" font-weight="bold" text-anchor="end" stroke="#000" stroke-width="0.12">$6.150</text></g>
<g clip-path="url(#c13_9)"><text transform="translate(837.18,286.38) scale(1.065,1)" font-size="11.6" fill="#000" font-weight="bold" text-anchor="end" stroke="#000" stroke-width="0.12">$7.970</text></g>
<g clip-path="url(#c14_9)"><text transform="translate(895.45,286.38) scale(1.065,1)" font-size="11.6" fill="#000" font-weight="bold" text-anchor="end" stroke="#000" stroke-width="0.12">$59.270</text></g>
<g clip-path="url(#c17_1)"><text transform="translate(1017.09,148.50) scale(0.975,1)" font-size="11.6" fill="#000" font-weight="bold" text-anchor="start" stroke="#000" stroke-width="0.12">Categories</text></g>
<g clip-path="url(#c18_1)"><text transform="translate(1075.36,148.50) scale(0.975,1)" font-size="11.6" fill="#000" font-weight="bold" text-anchor="start" stroke="#000" stroke-width="0.12">Total</text></g>
<g clip-path="url(#c17_2)"><text transform="translate(1017.09,165.73) scale(1.015,1)" font-size="11.6" fill="#000" font-weight="normal" text-anchor="start" stroke="#000" stroke-width="0.22">Customer Acquisition</text></g>
<g clip-path="url(#c18_2)"><text transform="translate(1128.53,165.73) scale(1.065,1)" font-size="11.6" fill="#000" font-weight="bold" text-anchor="end" stroke="#000" stroke-width="0.12">$8.181</text></g>
<g clip-path="url(#c17_3)"><text transform="translate(1017.09,182.97) scale(1.015,1)" font-size="11.6" fill="#000" font-weight="normal" text-anchor="start" stroke="#000" stroke-width="0.22">Miscellaneous</text></g>
<g clip-path="url(#c18_3)"><text transform="translate(1128.53,182.97) scale(1.065,1)" font-size="11.6" fill="#000" font-weight="bold" text-anchor="end" stroke="#000" stroke-width="0.12">$5.094</text></g>
<g clip-path="url(#c17_4)"><text transform="translate(1017.09,200.21) scale(1.015,1)" font-size="11.6" fill="#000" font-weight="normal" text-anchor="start" stroke="#000" stroke-width="0.22">Administrative</text></g>
<g clip-path="url(#c18_4)"><text transform="translate(1128.53,200.21) scale(1.065,1)" font-size="11.6" fill="#000" font-weight="bold" text-anchor="end" stroke="#000" stroke-width="0.12">$3.699</text></g>
<g clip-path="url(#c17_5)"><text transform="translate(1017.09,217.44) scale(1.015,1)" font-size="11.6" fill="#000" font-weight="normal" text-anchor="start" stroke="#000" stroke-width="0.22">Cost of Goods</text></g>
<g clip-path="url(#c18_5)"><text transform="translate(1128.53,217.44) scale(1.065,1)" font-size="11.6" fill="#000" font-weight="bold" text-anchor="end" stroke="#000" stroke-width="0.12">$28.646</text></g>
<g clip-path="url(#c17_6)"><text transform="translate(1017.09,234.67) scale(1.015,1)" font-size="11.6" fill="#000" font-weight="normal" text-anchor="start" stroke="#000" stroke-width="0.22">Travel</text></g>
<g clip-path="url(#c18_6)"><text transform="translate(1128.53,234.67) scale(1.065,1)" font-size="11.6" fill="#000" font-weight="bold" text-anchor="end" stroke="#000" stroke-width="0.12">$13.650</text></g>
<rect x="24.20" y="118.80" width="58.27" height="16.57" fill="#D2D2D2" />
<line x1="82.47" y1="120.10" x2="82.47" y2="135.37" stroke="#C6C6C6" stroke-width="1" />
<text x="53.34" y="131.20" font-size="11.8" fill="#217346" font-weight="normal" text-anchor="middle" font-style="normal" >A</text>
<line x1="140.74" y1="120.10" x2="140.74" y2="135.37" stroke="#C6C6C6" stroke-width="1" />
<text x="111.61" y="131.20" font-size="11.8" fill="#333" font-weight="normal" text-anchor="middle" font-style="normal" >B</text>
<line x1="199.01" y1="120.10" x2="199.01" y2="135.37" stroke="#C6C6C6" stroke-width="1" />
<text x="169.88" y="131.20" font-size="11.8" fill="#333" font-weight="normal" text-anchor="middle" font-style="normal" >C</text>
<line x1="257.28" y1="120.10" x2="257.28" y2="135.37" stroke="#C6C6C6" stroke-width="1" />
<text x="228.14" y="131.20" font-size="11.8" fill="#333" font-weight="normal" text-anchor="middle" font-style="normal" >D</text>
<line x1="315.55" y1="120.10" x2="315.55" y2="135.37" stroke="#C6C6C6" stroke-width="1" />
<text x="286.42" y="131.20" font-size="11.8" fill="#333" font-weight="normal" text-anchor="middle" font-style="normal" >E</text>
<line x1="373.82" y1="120.10" x2="373.82" y2="135.37" stroke="#C6C6C6" stroke-width="1" />
<text x="344.69" y="131.20" font-size="11.8" fill="#333" font-weight="normal" text-anchor="middle" font-style="normal" >F</text>
<line x1="432.09" y1="120.10" x2="432.09" y2="135.37" stroke="#C6C6C6" stroke-width="1" />
<text x="402.95" y="131.20" font-size="11.8" fill="#333" font-weight="normal" text-anchor="middle" font-style="normal" >G</text>
<line x1="490.36" y1="120.10" x2="490.36" y2="135.37" stroke="#C6C6C6" stroke-width="1" />
<text x="461.23" y="131.20" font-size="11.8" fill="#333" font-weight="normal" text-anchor="middle" font-style="normal" >H</text>
<line x1="548.63" y1="120.10" x2="548.63" y2="135.37" stroke="#C6C6C6" stroke-width="1" />
<text x="519.50" y="131.20" font-size="11.8" fill="#333" font-weight="normal" text-anchor="middle" font-style="normal" >I</text>
<line x1="606.90" y1="120.10" x2="606.90" y2="135.37" stroke="#C6C6C6" stroke-width="1" />
<text x="577.77" y="131.20" font-size="11.8" fill="#333" font-weight="normal" text-anchor="middle" font-style="normal" >J</text>
<line x1="665.17" y1="120.10" x2="665.17" y2="135.37" stroke="#C6C6C6" stroke-width="1" />
<text x="636.04" y="131.20" font-size="11.8" fill="#333" font-weight="normal" text-anchor="middle" font-style="normal" >K</text>
<line x1="723.44" y1="120.10" x2="723.44" y2="135.37" stroke="#C6C6C6" stroke-width="1" />
<text x="694.31" y="131.20" font-size="11.8" fill="#333" font-weight="normal" text-anchor="middle" font-style="normal" >L</text>
<line x1="781.71" y1="120.10" x2="781.71" y2="135.37" stroke="#C6C6C6" stroke-width="1" />
<text x="752.58" y="131.20" font-size="11.8" fill="#333" font-weight="normal" text-anchor="middle" font-style="normal" >M</text>
<line x1="839.98" y1="120.10" x2="839.98" y2="135.37" stroke="#C6C6C6" stroke-width="1" />
<text x="810.85" y="131.20" font-size="11.8" fill="#333" font-weight="normal" text-anchor="middle" font-style="normal" >N</text>
<line x1="898.25" y1="120.10" x2="898.25" y2="135.37" stroke="#C6C6C6" stroke-width="1" />
<text x="869.12" y="131.20" font-size="11.8" fill="#333" font-weight="normal" text-anchor="middle" font-style="normal" >O</text>
<line x1="956.52" y1="120.10" x2="956.52" y2="135.37" stroke="#C6C6C6" stroke-width="1" />
<text x="927.39" y="131.20" font-size="11.8" fill="#333" font-weight="normal" text-anchor="middle" font-style="normal" >P</text>
<line x1="1014.79" y1="120.10" x2="1014.79" y2="135.37" stroke="#C6C6C6" stroke-width="1" />
<text x="985.66" y="131.20" font-size="11.8" fill="#333" font-weight="normal" text-anchor="middle" font-style="normal" >Q</text>
<line x1="1073.06" y1="120.10" x2="1073.06" y2="135.37" stroke="#C6C6C6" stroke-width="1" />
<text x="1043.93" y="131.20" font-size="11.8" fill="#333" font-weight="normal" text-anchor="middle" font-style="normal" >R</text>
<line x1="1131.33" y1="120.10" x2="1131.33" y2="135.37" stroke="#C6C6C6" stroke-width="1" />
<text x="1102.20" y="131.20" font-size="11.8" fill="#333" font-weight="normal" text-anchor="middle" font-style="normal" >S</text>
<line x1="1189.60" y1="120.10" x2="1189.60" y2="135.37" stroke="#C6C6C6" stroke-width="1" />
<text x="1160.47" y="131.20" font-size="11.8" fill="#333" font-weight="normal" text-anchor="middle" font-style="normal" >T</text>
<line x1="0.00" y1="134.97" x2="1189.40" y2="134.97" stroke="#BDBDBD" stroke-width="1.1" />
<path d="M10 132.7 L22.1 132.7 L22.1 121.3 Z" fill="#BDBDBD"/>
<rect x="0.00" y="135.37" width="23.60" height="17.23" fill="#D2D2D2" />
<line x1="0.00" y1="152.60" x2="24.20" y2="152.60" stroke="#CFCFCF" stroke-width="1" />
<text x="12.40" y="149.00" font-size="11.8" fill="#217346" font-weight="normal" text-anchor="middle" font-style="normal" >1</text>
<line x1="0.00" y1="169.83" x2="24.20" y2="169.83" stroke="#CFCFCF" stroke-width="1" />
<text x="12.40" y="166.23" font-size="11.8" fill="#333" font-weight="normal" text-anchor="middle" font-style="normal" >2</text>
<line x1="0.00" y1="187.07" x2="24.20" y2="187.07" stroke="#CFCFCF" stroke-width="1" />
<text x="12.40" y="183.47" font-size="11.8" fill="#333" font-weight="normal" text-anchor="middle" font-style="normal" >3</text>
<line x1="0.00" y1="204.31" x2="24.20" y2="204.31" stroke="#CFCFCF" stroke-width="1" />
<text x="12.40" y="200.71" font-size="11.8" fill="#333" font-weight="normal" text-anchor="middle" font-style="normal" >4</text>
<line x1="0.00" y1="221.54" x2="24.20" y2="221.54" stroke="#CFCFCF" stroke-width="1" />
<text x="12.40" y="217.94" font-size="11.8" fill="#333" font-weight="normal" text-anchor="middle" font-style="normal" >5</text>
<line x1="0.00" y1="238.77" x2="24.20" y2="238.77" stroke="#CFCFCF" stroke-width="1" />
<text x="12.40" y="235.17" font-size="11.8" fill="#333" font-weight="normal" text-anchor="middle" font-style="normal" >6</text>
<line x1="0.00" y1="256.01" x2="24.20" y2="256.01" stroke="#CFCFCF" stroke-width="1" />
<text x="12.40" y="252.41" font-size="11.8" fill="#333" font-weight="normal" text-anchor="middle" font-style="normal" >7</text>
<line x1="0.00" y1="273.25" x2="24.20" y2="273.25" stroke="#CFCFCF" stroke-width="1" />
<text x="12.40" y="269.64" font-size="11.8" fill="#333" font-weight="normal" text-anchor="middle" font-style="normal" >8</text>
<line x1="0.00" y1="290.48" x2="24.20" y2="290.48" stroke="#CFCFCF" stroke-width="1" />
<text x="12.40" y="286.88" font-size="11.8" fill="#333" font-weight="normal" text-anchor="middle" font-style="normal" >9</text>
<line x1="0.00" y1="307.72" x2="24.20" y2="307.72" stroke="#CFCFCF" stroke-width="1" />
<text x="12.40" y="304.12" font-size="11.8" fill="#333" font-weight="normal" text-anchor="middle" font-style="normal" >10</text>
<line x1="0.00" y1="324.95" x2="24.20" y2="324.95" stroke="#CFCFCF" stroke-width="1" />
<text x="12.40" y="321.35" font-size="11.8" fill="#333" font-weight="normal" text-anchor="middle" font-style="normal" >11</text>
<line x1="0.00" y1="342.18" x2="24.20" y2="342.18" stroke="#CFCFCF" stroke-width="1" />
<text x="12.40" y="338.58" font-size="11.8" fill="#333" font-weight="normal" text-anchor="middle" font-style="normal" >12</text>
<line x1="0.00" y1="359.42" x2="24.20" y2="359.42" stroke="#CFCFCF" stroke-width="1" />
<text x="12.40" y="355.82" font-size="11.8" fill="#333" font-weight="normal" text-anchor="middle" font-style="normal" >13</text>
<line x1="0.00" y1="376.65" x2="24.20" y2="376.65" stroke="#CFCFCF" stroke-width="1" />
<text x="12.40" y="373.05" font-size="11.8" fill="#333" font-weight="normal" text-anchor="middle" font-style="normal" >14</text>
<line x1="0.00" y1="393.89" x2="24.20" y2="393.89" stroke="#CFCFCF" stroke-width="1" />
<text x="12.40" y="390.29" font-size="11.8" fill="#333" font-weight="normal" text-anchor="middle" font-style="normal" >15</text>
<line x1="0.00" y1="411.12" x2="24.20" y2="411.12" stroke="#CFCFCF" stroke-width="1" />
<text x="12.40" y="407.52" font-size="11.8" fill="#333" font-weight="normal" text-anchor="middle" font-style="normal" >16</text>
<line x1="0.00" y1="428.36" x2="24.20" y2="428.36" stroke="#CFCFCF" stroke-width="1" />
<text x="12.40" y="424.76" font-size="11.8" fill="#333" font-weight="normal" text-anchor="middle" font-style="normal" >17</text>
<line x1="0.00" y1="445.60" x2="24.20" y2="445.60" stroke="#CFCFCF" stroke-width="1" />
<text x="12.40" y="442.00" font-size="11.8" fill="#333" font-weight="normal" text-anchor="middle" font-style="normal" >18</text>
<line x1="0.00" y1="462.83" x2="24.20" y2="462.83" stroke="#CFCFCF" stroke-width="1" />
<text x="12.40" y="459.23" font-size="11.8" fill="#333" font-weight="normal" text-anchor="middle" font-style="normal" >19</text>
<line x1="0.00" y1="480.06" x2="24.20" y2="480.06" stroke="#CFCFCF" stroke-width="1" />
<text x="12.40" y="476.46" font-size="11.8" fill="#333" font-weight="normal" text-anchor="middle" font-style="normal" >20</text>
<line x1="0.00" y1="497.30" x2="24.20" y2="497.30" stroke="#CFCFCF" stroke-width="1" />
<text x="12.40" y="493.70" font-size="11.8" fill="#333" font-weight="normal" text-anchor="middle" font-style="normal" >21</text>
<line x1="0.00" y1="514.53" x2="24.20" y2="514.53" stroke="#CFCFCF" stroke-width="1" />
<text x="12.40" y="510.93" font-size="11.8" fill="#333" font-weight="normal" text-anchor="middle" font-style="normal" >22</text>
<line x1="0.00" y1="531.77" x2="24.20" y2="531.77" stroke="#CFCFCF" stroke-width="1" />
<text x="12.40" y="528.17" font-size="11.8" fill="#333" font-weight="normal" text-anchor="middle" font-style="normal" >23</text>
<line x1="0.00" y1="549.00" x2="24.20" y2="549.00" stroke="#CFCFCF" stroke-width="1" />
<text x="12.40" y="545.40" font-size="11.8" fill="#333" font-weight="normal" text-anchor="middle" font-style="normal" >24</text>
<line x1="0.00" y1="566.24" x2="24.20" y2="566.24" stroke="#CFCFCF" stroke-width="1" />
<text x="12.40" y="562.64" font-size="11.8" fill="#333" font-weight="normal" text-anchor="middle" font-style="normal" >25</text>
<line x1="0.00" y1="583.48" x2="24.20" y2="583.48" stroke="#CFCFCF" stroke-width="1" />
<text x="12.40" y="579.88" font-size="11.8" fill="#333" font-weight="normal" text-anchor="middle" font-style="normal" >26</text>
<line x1="23.90" y1="135.37" x2="23.90" y2="582.50" stroke="#BDBDBD" stroke-width="1.1" />
<rect x="24.40" y="135.56" width="57.67" height="16.63" fill="none" stroke="#217346" stroke-width="1.8"/>
<rect x="80.27" y="150.40" width="4.00" height="4.00" fill="#217346" stroke="#fff" stroke-width="0.6"/>
<rect x="0.00" y="582.50" width="1200.00" height="15.50" fill="#E6E6E6" />
<rect x="0.00" y="582.20" width="1190.40" height="1.00" fill="#C6C6C6" />
<path d="M18.6 588.4 L16.8 590.2 L18.6 592" fill="none" stroke="#B0B0B0" stroke-width="0.8"/>
<path d="M34.6 588.4 L36.4 590.2 L34.6 592" fill="none" stroke="#B0B0B0" stroke-width="0.8"/>
<rect x="62.50" y="582.60" width="42.50" height="14.00" fill="#FFFFFF" />
<rect x="62.20" y="582.60" width="0.80" height="14.00" fill="#C6C6C6" />
<rect x="104.80" y="582.60" width="0.80" height="14.00" fill="#C6C6C6" />
<rect x="62.50" y="595.60" width="42.50" height="1.40" fill="#217346" />
<text x="70.00" y="592.60" font-size="8.2" fill="#217346" font-weight="bold" text-anchor="start" font-style="normal" textLength="26.80" lengthAdjust="spacingAndGlyphs" stroke="#217346" stroke-width="0.12">Budget</text>
<text x="112.60" y="592.60" font-size="8.2" fill="#444" font-weight="normal" text-anchor="start" font-style="normal" textLength="40.80" lengthAdjust="spacingAndGlyphs" stroke="#444" stroke-width="0.12">Dashboard</text>
<rect x="161.00" y="584.20" width="0.90" height="11.60" fill="#B8B8B8" />
<circle cx="187.5" cy="590.3" r="4.9" fill="none" stroke="#777" stroke-width="0.9"/><path d="M185 590.3 H190 M187.5 587.8 V592.8" stroke="#555" stroke-width="0.9"/>
<rect x="721.60" y="587.60" width="0.90" height="0.90" fill="#9A9A9A" />
<rect x="721.60" y="590.20" width="0.90" height="0.90" fill="#9A9A9A" />
<rect x="721.60" y="592.80" width="0.90" height="0.90" fill="#9A9A9A" />
<rect x="732.4" y="585.8" width="9.4" height="8.6" fill="#fff" stroke="#C6C6C6" stroke-width="0.7"/>
<path d="M735.4 590.1 L738.2 588.2 V592 Z" fill="#444"/>
<rect x="741.80" y="585.80" width="414.40" height="8.60" fill="#FFFFFF" />
<rect x="741.8" y="585.8" width="414.4" height="8.6" fill="#fff" stroke="#C6C6C6" stroke-width="0.7"/>
<rect x="1156.40" y="585.80" width="24.60" height="8.60" fill="#DADADA" />
<rect x="1181" y="585.8" width="9.6" height="8.6" fill="#fff" stroke="#C6C6C6" stroke-width="0.7"/>
<path d="M1187 590.1 L1184.2 588.2 V592 Z" fill="#444"/>
<rect x="1189.20" y="118.80" width="10.80" height="463.70" fill="#E6E6E6" />
<rect x="1188.80" y="135.37" width="2.60" height="447.13" fill="#D0D0D0" />
<rect x="1191.6" y="120.6" width="8.4" height="8" fill="#fff" stroke="#C6C6C6" stroke-width="0.7"/>
<path d="M1193.6 125.6 H1198 L1195.8 123 Z" fill="#555"/>
<rect x="1191.60" y="129.00" width="8.40" height="426.80" fill="#FFFFFF" />
<rect x="1191.60" y="555.80" width="8.40" height="19.00" fill="#D6D6D6" />
<rect x="1191.6" y="574.8" width="8.4" height="7.2" fill="#fff" stroke="#C6C6C6" stroke-width="0.7"/>
<path d="M1193.6 577.2 H1198 L1195.8 579.8 Z" fill="#555"/>
<rect x="0.00" y="597.80" width="1200.00" height="12.20" fill="#F0F0F0" />
<rect x="0.00" y="597.20" width="1200.00" height="0.80" fill="#D8D8D8" />
<text x="4.00" y="607.20" font-size="7.6" fill="#333" font-weight="normal" text-anchor="start" font-style="normal" textLength="19.20" lengthAdjust="spacingAndGlyphs" stroke="#333" stroke-width="0.12">Ready</text>
<rect x="36.4" y="601.4" width="6.8" height="6" fill="#fff" stroke="#777" stroke-width="0.8"/><rect x="36.4" y="601.4" width="6.8" height="1.6" fill="#777"/><circle cx="37.4" cy="600.4" r="1.2" fill="#555"/><path d="M38 604.6 H42 M38 606 H42" stroke="#999" stroke-width="0.6"/>
<rect x="1023.00" y="598.00" width="24.00" height="12.00" fill="#D4D4D4" />
<g fill="none" stroke="#666" stroke-width="0.7"><rect x="1030.6" y="600.6" width="8.6" height="7.6"/><path d="M1030.6 603.1 H1039.2 M1030.6 605.6 H1039.2 M1033.4 600.6 V608.2 M1036.3 600.6 V608.2"/></g>
<g fill="none" stroke="#888" stroke-width="0.7"><rect x="1054.2" y="600.8" width="10" height="7.4"/><rect x="1056.2" y="602" width="6" height="5"/></g>
<g fill="none" stroke="#666" stroke-width="0.8"><rect x="1077.6" y="600.6" width="9" height="7.8"/><path d="M1080.4 600.6 V603.8 H1083.4 V600.6"/></g>
<rect x="1097.80" y="604.20" width="3.60" height="1.00" fill="#555" />
<rect x="1104.40" y="604.60" width="62.60" height="0.70" fill="#9A9A9A" />
<rect x="1138.60" y="601.40" width="2.60" height="6.00" fill="#555" />
<rect x="1134.00" y="603.60" width="0.70" height="2.00" fill="#9A9A9A" />
<path d="M1169 604.7 H1173.6 M1171.3 602.4 V607" stroke="#555" stroke-width="1"/>
<text x="1181.40" y="607.60" font-size="7.6" fill="#333" font-weight="normal" text-anchor="start" font-style="normal" textLength="17.20" lengthAdjust="spacingAndGlyphs" stroke="#333" stroke-width="0.12">145%</text>
</svg>
</body></html>
